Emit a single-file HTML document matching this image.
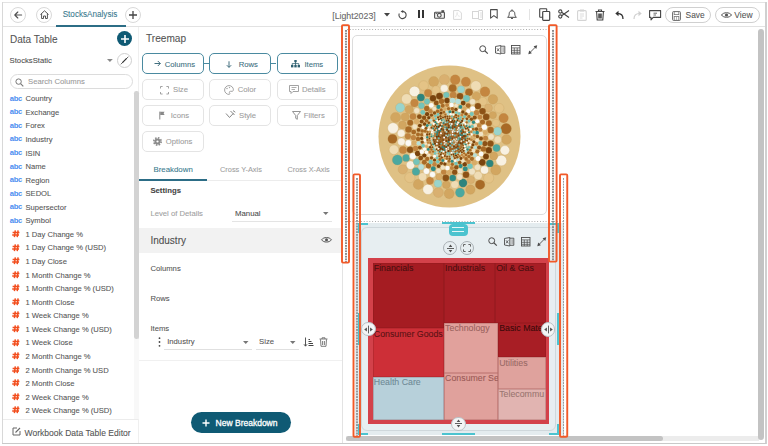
<!DOCTYPE html>
<html><head><meta charset="utf-8"><style>
html,body{margin:0;padding:0;width:768px;height:446px;overflow:hidden;background:#fff}
.t{position:absolute;white-space:nowrap;font-family:"Liberation Sans", sans-serif;-webkit-text-stroke:0.08px currentColor}
.b{position:absolute}
.s{position:absolute;overflow:visible}
</style></head><body>
<div class="b" style="left:2px;top:2px;width:765px;height:1px;background:#e3e3e3"></div>
<div class="b" style="left:2px;top:2px;width:1px;height:442px;background:#d8d8d8"></div>
<div class="b" style="left:765px;top:2px;width:1.5px;height:442px;background:#d0d0d0"></div>
<div class="b" style="left:2px;top:442.5px;width:764px;height:1.5px;background:#c9c9c9"></div>
<div class="b" style="left:3px;top:26.2px;width:762px;height:1.0px;background:#e2e2e2"></div>
<div class="b" style="left:10px;top:6.5px;width:16px;height:16.0px;border:1px solid #d9d9d9;border-radius:50%;box-sizing:border-box"></div>
<svg class="s" style="left:13px;top:9.5px" width="10" height="10" viewBox="0 0 10 10"><path d="M8.6 5H2M4.8 2L1.8 5L4.8 8" stroke="#505050" stroke-width="1.15" fill="none" stroke-linecap="round" stroke-linejoin="round"/></svg>
<div class="b" style="left:36px;top:6.5px;width:16px;height:16.0px;border:1px solid #d9d9d9;border-radius:50%;box-sizing:border-box"></div>
<svg class="s" style="left:38.5px;top:9px" width="11" height="11" viewBox="0 0 11 11"><path d="M1.5 5.5L5.5 1.8L9.5 5.5M2.6 4.8V9.5H4.5V7H6.5V9.5H8.4V4.8" stroke="#555" stroke-width="1" fill="none" stroke-linejoin="round"/></svg>
<div class="t" style="left:62.7px;top:10.11px;font-size:8.15px;line-height:9.78px;color:#3a7a8e;font-weight:400;">StocksAnalysis</div>
<div class="b" style="left:56px;top:25px;width:70px;height:1.8000000000000007px;background:#2c6d86"></div>
<div class="b" style="left:125px;top:6.5px;width:16px;height:16.0px;border:1px solid #d9d9d9;border-radius:50%;box-sizing:border-box"></div>
<svg class="s" style="left:128px;top:9.5px" width="10" height="10" viewBox="0 0 10 10"><path d="M5 1V9M1 5H9" stroke="#444" stroke-width="1.3"/></svg>
<div class="t" style="left:332.2px;top:10.62px;font-size:8.8px;line-height:10.56px;color:#666;font-weight:400;">[Light2023]</div>
<svg class="s" style="left:383.5px;top:13px" width="7" height="4" viewBox="0 0 7 4"><path d="M0 0H6L3 3.5Z" fill="#444"/></svg>
<svg class="s" style="left:398px;top:10px" width="9" height="9.5" viewBox="0 0 9 9.5"><path d="M4.6 1.4A3.6 3.6 0 1 1 1.3 3.4" stroke="#4a4a4a" stroke-width="1.1" fill="none"/><path d="M2.6 1.4L5.2 -0.1V2.9Z" fill="#4a4a4a"/></svg>
<div class="b" style="left:417.8px;top:10px;width:2.3999999999999773px;height:8px;background:#333"></div>
<div class="b" style="left:421.8px;top:10px;width:2.3999999999999773px;height:8px;background:#333"></div>
<svg class="s" style="left:434px;top:10px" width="11" height="9" viewBox="0 0 11 9"><rect x="0.6" y="2.3" width="9.8" height="6" rx="0.8" stroke="#505050" stroke-width="1.1" fill="#f4f4f4"/><circle cx="5.3" cy="5.3" r="1.9" stroke="#505050" stroke-width="1.1" fill="none"/><rect x="7.4" y="0.2" width="2.8" height="2.2" fill="#505050"/><path d="M1.6 3.6H3" stroke="#505050" stroke-width="0.9"/></svg>
<svg class="s" style="left:453px;top:9.5px" width="9" height="10" viewBox="0 0 9 10"><path d="M0.6 0.6H6L8.4 3V9.4H0.6Z" stroke="#d9d9d9" stroke-width="1" fill="none"/><path d="M2.3 7.2C3.5 5 4.5 3.5 4.3 2.5C4 2 3.5 3 4.5 4.8C5.2 6 6.3 6.5 6.8 6.2" stroke="#dedede" stroke-width="0.7" fill="none"/></svg>
<svg class="s" style="left:471.5px;top:9.5px" width="11" height="10" viewBox="0 0 11 10"><rect x="0.5" y="1.5" width="6" height="7" stroke="#d6d6d6" fill="none"/><path d="M6.5 0.5H10.5V9.5H6.5" stroke="#d6d6d6" fill="none"/><path d="M8 3H10M8 5H10M8 7H10" stroke="#e0e0e0"/></svg>
<svg class="s" style="left:490.3px;top:9.3px" width="8" height="10" viewBox="0 0 8 10"><path d="M0.6 0.6H7.2V9.2L3.9 6.6L0.6 9.2Z" stroke="#4a4a4a" stroke-width="1.05" fill="none" stroke-linejoin="round"/></svg>
<svg class="s" style="left:507.3px;top:9px" width="10" height="10.5" viewBox="0 0 10 10.5"><path d="M0.6 8.3H9.4C8.2 7.3 7.8 6.2 7.8 4.8C7.8 2.9 6.8 1.8 5 1.8C3.2 1.8 2.2 2.9 2.2 4.8C2.2 6.2 1.8 7.3 0.6 8.3Z" stroke="#4a4a4a" stroke-width="1" fill="none" stroke-linejoin="round"/><path d="M5 0.4V1.8M4 9.4H6" stroke="#4a4a4a" stroke-width="1"/></svg>
<div class="b" style="left:529px;top:9px;width:1px;height:11px;background:#e3e3e3"></div>
<svg class="s" style="left:539px;top:8px" width="12" height="13" viewBox="0 0 12 13"><rect x="0.7" y="0.7" width="7" height="8.5" rx="0.5" stroke="#444" stroke-width="1.1" fill="#fff"/><rect x="3.7" y="3.5" width="7" height="8.8" rx="0.8" stroke="#444" stroke-width="1.2" fill="#fff"/></svg>
<svg class="s" style="left:557.5px;top:9px" width="12" height="10" viewBox="0 0 12 10"><circle cx="2.3" cy="2.5" r="1.6" stroke="#444" stroke-width="1.1" fill="none"/><circle cx="2.3" cy="7.5" r="1.6" stroke="#444" stroke-width="1.1" fill="none"/><path d="M3.6 3.3L11 8.5M3.6 6.7L11 1.5" stroke="#444" stroke-width="1.1"/></svg>
<svg class="s" style="left:577px;top:8.5px" width="10" height="12" viewBox="0 0 10 12"><rect x="0.6" y="1.6" width="8.6" height="9.8" rx="1" stroke="#d4d4d4" stroke-width="1.1" fill="none"/><rect x="3" y="0.5" width="4" height="2" fill="#d4d4d4"/><path d="M2.8 5H7M2.8 7H7M2.8 9H5.5" stroke="#dcdcdc"/></svg>
<svg class="s" style="left:595px;top:8.5px" width="10" height="12" viewBox="0 0 10 12"><path d="M0.5 2.5H9.5M3.5 2.5V1H6.5V2.5M1.6 2.8L2.2 11H7.8L8.4 2.8M3.8 4.5V9.5M6.2 4.5V9.5M5 4.5V9.5" stroke="#444" stroke-width="1.1" fill="none"/></svg>
<svg class="s" style="left:614.5px;top:10px" width="9" height="10" viewBox="0 0 9 10"><path d="M8 9C8 5 6 3.5 2.5 3.5" stroke="#333" stroke-width="1.3" fill="none"/><path d="M0.3 3.5L3.5 0.8V6.2Z" fill="#333"/></svg>
<svg class="s" style="left:632.5px;top:10px" width="9" height="10" viewBox="0 0 9 10"><path d="M1 9C1 5 3 3.5 6.5 3.5" stroke="#cfcfcf" stroke-width="1.2" fill="none"/><path d="M8.7 3.5L5.5 0.8V6.2Z" fill="#cfcfcf"/></svg>
<svg class="s" style="left:649px;top:9.8px" width="12.5" height="11" viewBox="0 0 12.5 11"><path d="M0.6 0.6H11.6V7.4H4.2L2 9.8V7.4H0.6Z" stroke="#444" stroke-width="1.1" fill="none" stroke-linejoin="round"/><path d="M4.5 3.2H8M4.5 5H7" stroke="#444" stroke-width="0.8"/></svg>
<div class="b" style="left:665px;top:7px;width:46px;height:16px;border:1px solid #d0d0d0;border-radius:8px;box-sizing:border-box"></div>
<svg class="s" style="left:671.5px;top:10.5px" width="9" height="10" viewBox="0 0 9 10"><rect x="0.6" y="0.6" width="7.8" height="8.8" rx="0.8" stroke="#666" stroke-width="1" fill="none"/><rect x="2.2" y="0.6" width="4.6" height="3" stroke="#777" stroke-width="0.8" fill="none"/><rect x="2.2" y="5.5" width="4.6" height="3.9" stroke="#777" stroke-width="0.8" fill="none"/><path d="M4.5 5.5V9.4" stroke="#888" stroke-width="0.6"/></svg>
<div class="t" style="left:685.6px;top:10.16px;font-size:8.4px;line-height:10.08px;color:#555;font-weight:400;">Save</div>
<div class="b" style="left:715px;top:7px;width:45px;height:16px;border:1px solid #d0d0d0;border-radius:8px;box-sizing:border-box"></div>
<svg class="s" style="left:720.5px;top:11px" width="11" height="8" viewBox="0 0 11 8"><path d="M0.5 4C2.3 1 8.7 1 10.5 4C8.7 7 2.3 7 0.5 4Z" stroke="#555" stroke-width="1" fill="none"/><circle cx="5.5" cy="4" r="1.6" fill="#555"/></svg>
<div class="t" style="left:734.3px;top:10.10px;font-size:8.5px;line-height:10.20px;color:#555;font-weight:400;">View</div>
<div class="b" style="left:138px;top:27px;width:1px;height:416px;background:#efefef"></div>
<div class="t" style="left:10px;top:33.60px;font-size:10px;line-height:12.00px;color:#555;font-weight:400;">Data Table</div>
<div class="b" style="left:116.7px;top:30.8px;width:15.299999999999997px;height:15.2px;background:#0f5a74;border-radius:50%"></div>
<svg class="s" style="left:119.5px;top:33.5px" width="10" height="10" viewBox="0 0 10 10"><path d="M5 1V9M1 5H9" stroke="#fff" stroke-width="1.6"/></svg>
<div class="t" style="left:9.6px;top:56.18px;font-size:7.7px;line-height:9.24px;color:#4d4d4d;font-weight:400;">StocksStatic</div>
<svg class="s" style="left:107.3px;top:58.6px" width="6" height="4" viewBox="0 0 6 4"><path d="M0 0H5.8L2.9 3Z" fill="#888"/></svg>
<div class="b" style="left:117px;top:52.7px;width:15px;height:15.0px;border:1px solid #cfcfcf;border-radius:50%;box-sizing:border-box"></div>
<svg class="s" style="left:119.8px;top:55.5px" width="9" height="9" viewBox="0 0 9 9"><path d="M0.8 8.3L8.4 0.7" stroke="#333" stroke-width="0.8"/><path d="M2 6.2L2.8 7L7 2.8L6.2 2Z" fill="#333"/></svg>
<div class="b" style="left:10px;top:74.4px;width:122.5px;height:14.799999999999997px;border:1px solid #dcdcdc;border-radius:8px;box-sizing:border-box"></div>
<svg class="s" style="left:14.5px;top:77.5px" width="9" height="9" viewBox="0 0 9 9"><circle cx="3.6" cy="3.6" r="2.7" stroke="#777" stroke-width="1" fill="none"/><path d="M5.6 5.6L8.3 8.3" stroke="#777" stroke-width="1.1"/></svg>
<div class="t" style="left:28px;top:77.38px;font-size:7.7px;line-height:9.24px;color:#999;font-weight:400;">Search Columns</div>
<div class="t" style="left:9.8px;top:93.69px;font-size:7.6px;line-height:9.12px;color:#4a8ef0;font-weight:700;letter-spacing:-0.35px;-webkit-text-stroke:0">abc</div>
<div class="t" style="left:25.5px;top:94.24px;font-size:7.6px;line-height:9.12px;color:#555;font-weight:400;">Country</div>
<div class="t" style="left:9.8px;top:107.25px;font-size:7.6px;line-height:9.12px;color:#4a8ef0;font-weight:700;letter-spacing:-0.35px;-webkit-text-stroke:0">abc</div>
<div class="t" style="left:25.5px;top:107.80px;font-size:7.6px;line-height:9.12px;color:#555;font-weight:400;">Exchange</div>
<div class="t" style="left:9.8px;top:120.82px;font-size:7.6px;line-height:9.12px;color:#4a8ef0;font-weight:700;letter-spacing:-0.35px;-webkit-text-stroke:0">abc</div>
<div class="t" style="left:25.5px;top:121.37px;font-size:7.6px;line-height:9.12px;color:#555;font-weight:400;">Forex</div>
<div class="t" style="left:9.8px;top:134.38px;font-size:7.6px;line-height:9.12px;color:#4a8ef0;font-weight:700;letter-spacing:-0.35px;-webkit-text-stroke:0">abc</div>
<div class="t" style="left:25.5px;top:134.94px;font-size:7.6px;line-height:9.12px;color:#555;font-weight:400;">Industry</div>
<div class="t" style="left:9.8px;top:147.95px;font-size:7.6px;line-height:9.12px;color:#4a8ef0;font-weight:700;letter-spacing:-0.35px;-webkit-text-stroke:0">abc</div>
<div class="t" style="left:25.5px;top:148.50px;font-size:7.6px;line-height:9.12px;color:#555;font-weight:400;">ISIN</div>
<div class="t" style="left:9.8px;top:161.51px;font-size:7.6px;line-height:9.12px;color:#4a8ef0;font-weight:700;letter-spacing:-0.35px;-webkit-text-stroke:0">abc</div>
<div class="t" style="left:25.5px;top:162.06px;font-size:7.6px;line-height:9.12px;color:#555;font-weight:400;">Name</div>
<div class="t" style="left:9.8px;top:175.08px;font-size:7.6px;line-height:9.12px;color:#4a8ef0;font-weight:700;letter-spacing:-0.35px;-webkit-text-stroke:0">abc</div>
<div class="t" style="left:25.5px;top:175.63px;font-size:7.6px;line-height:9.12px;color:#555;font-weight:400;">Region</div>
<div class="t" style="left:9.8px;top:188.64px;font-size:7.6px;line-height:9.12px;color:#4a8ef0;font-weight:700;letter-spacing:-0.35px;-webkit-text-stroke:0">abc</div>
<div class="t" style="left:25.5px;top:189.19px;font-size:7.6px;line-height:9.12px;color:#555;font-weight:400;">SEDOL</div>
<div class="t" style="left:9.8px;top:202.21px;font-size:7.6px;line-height:9.12px;color:#4a8ef0;font-weight:700;letter-spacing:-0.35px;-webkit-text-stroke:0">abc</div>
<div class="t" style="left:25.5px;top:202.76px;font-size:7.6px;line-height:9.12px;color:#555;font-weight:400;">Supersector</div>
<div class="t" style="left:9.8px;top:215.77px;font-size:7.6px;line-height:9.12px;color:#4a8ef0;font-weight:700;letter-spacing:-0.35px;-webkit-text-stroke:0">abc</div>
<div class="t" style="left:25.5px;top:216.32px;font-size:7.6px;line-height:9.12px;color:#555;font-weight:400;">Symbol</div>
<svg class="s" style="left:12px;top:230.04999999999998px" width="8" height="8" viewBox="0 0 8 8"><path d="M3.3 0.3L2.4 7.2M6.1 0.3L5.2 7.2M0.6 2.5H7.4M0.2 5H7" stroke="#f24e1e" stroke-width="1.5" fill="none"/></svg>
<div class="t" style="left:25.5px;top:229.89px;font-size:7.6px;line-height:9.12px;color:#555;font-weight:400;">1 Day Change %</div>
<svg class="s" style="left:12px;top:243.61499999999998px" width="8" height="8" viewBox="0 0 8 8"><path d="M3.3 0.3L2.4 7.2M6.1 0.3L5.2 7.2M0.6 2.5H7.4M0.2 5H7" stroke="#f24e1e" stroke-width="1.5" fill="none"/></svg>
<div class="t" style="left:25.5px;top:243.45px;font-size:7.6px;line-height:9.12px;color:#555;font-weight:400;">1 Day Change % (USD)</div>
<svg class="s" style="left:12px;top:257.18px" width="8" height="8" viewBox="0 0 8 8"><path d="M3.3 0.3L2.4 7.2M6.1 0.3L5.2 7.2M0.6 2.5H7.4M0.2 5H7" stroke="#f24e1e" stroke-width="1.5" fill="none"/></svg>
<div class="t" style="left:25.5px;top:257.02px;font-size:7.6px;line-height:9.12px;color:#555;font-weight:400;">1 Day Close</div>
<svg class="s" style="left:12px;top:270.745px" width="8" height="8" viewBox="0 0 8 8"><path d="M3.3 0.3L2.4 7.2M6.1 0.3L5.2 7.2M0.6 2.5H7.4M0.2 5H7" stroke="#f24e1e" stroke-width="1.5" fill="none"/></svg>
<div class="t" style="left:25.5px;top:270.58px;font-size:7.6px;line-height:9.12px;color:#555;font-weight:400;">1 Month Change %</div>
<svg class="s" style="left:12px;top:284.31px" width="8" height="8" viewBox="0 0 8 8"><path d="M3.3 0.3L2.4 7.2M6.1 0.3L5.2 7.2M0.6 2.5H7.4M0.2 5H7" stroke="#f24e1e" stroke-width="1.5" fill="none"/></svg>
<div class="t" style="left:25.5px;top:284.15px;font-size:7.6px;line-height:9.12px;color:#555;font-weight:400;">1 Month Change % (USD)</div>
<svg class="s" style="left:12px;top:297.875px" width="8" height="8" viewBox="0 0 8 8"><path d="M3.3 0.3L2.4 7.2M6.1 0.3L5.2 7.2M0.6 2.5H7.4M0.2 5H7" stroke="#f24e1e" stroke-width="1.5" fill="none"/></svg>
<div class="t" style="left:25.5px;top:297.71px;font-size:7.6px;line-height:9.12px;color:#555;font-weight:400;">1 Month Close</div>
<svg class="s" style="left:12px;top:311.44px" width="8" height="8" viewBox="0 0 8 8"><path d="M3.3 0.3L2.4 7.2M6.1 0.3L5.2 7.2M0.6 2.5H7.4M0.2 5H7" stroke="#f24e1e" stroke-width="1.5" fill="none"/></svg>
<div class="t" style="left:25.5px;top:311.28px;font-size:7.6px;line-height:9.12px;color:#555;font-weight:400;">1 Week Change %</div>
<svg class="s" style="left:12px;top:325.005px" width="8" height="8" viewBox="0 0 8 8"><path d="M3.3 0.3L2.4 7.2M6.1 0.3L5.2 7.2M0.6 2.5H7.4M0.2 5H7" stroke="#f24e1e" stroke-width="1.5" fill="none"/></svg>
<div class="t" style="left:25.5px;top:324.84px;font-size:7.6px;line-height:9.12px;color:#555;font-weight:400;">1 Week Change % (USD)</div>
<svg class="s" style="left:12px;top:338.57px" width="8" height="8" viewBox="0 0 8 8"><path d="M3.3 0.3L2.4 7.2M6.1 0.3L5.2 7.2M0.6 2.5H7.4M0.2 5H7" stroke="#f24e1e" stroke-width="1.5" fill="none"/></svg>
<div class="t" style="left:25.5px;top:338.41px;font-size:7.6px;line-height:9.12px;color:#555;font-weight:400;">1 Week Close</div>
<svg class="s" style="left:12px;top:352.13500000000005px" width="8" height="8" viewBox="0 0 8 8"><path d="M3.3 0.3L2.4 7.2M6.1 0.3L5.2 7.2M0.6 2.5H7.4M0.2 5H7" stroke="#f24e1e" stroke-width="1.5" fill="none"/></svg>
<div class="t" style="left:25.5px;top:351.98px;font-size:7.6px;line-height:9.12px;color:#555;font-weight:400;">2 Month Change %</div>
<svg class="s" style="left:12px;top:365.70000000000005px" width="8" height="8" viewBox="0 0 8 8"><path d="M3.3 0.3L2.4 7.2M6.1 0.3L5.2 7.2M0.6 2.5H7.4M0.2 5H7" stroke="#f24e1e" stroke-width="1.5" fill="none"/></svg>
<div class="t" style="left:25.5px;top:365.54px;font-size:7.6px;line-height:9.12px;color:#555;font-weight:400;">2 Month Change % USD</div>
<svg class="s" style="left:12px;top:379.26500000000004px" width="8" height="8" viewBox="0 0 8 8"><path d="M3.3 0.3L2.4 7.2M6.1 0.3L5.2 7.2M0.6 2.5H7.4M0.2 5H7" stroke="#f24e1e" stroke-width="1.5" fill="none"/></svg>
<div class="t" style="left:25.5px;top:379.11px;font-size:7.6px;line-height:9.12px;color:#555;font-weight:400;">2 Month Close</div>
<svg class="s" style="left:12px;top:392.83000000000004px" width="8" height="8" viewBox="0 0 8 8"><path d="M3.3 0.3L2.4 7.2M6.1 0.3L5.2 7.2M0.6 2.5H7.4M0.2 5H7" stroke="#f24e1e" stroke-width="1.5" fill="none"/></svg>
<div class="t" style="left:25.5px;top:392.67px;font-size:7.6px;line-height:9.12px;color:#555;font-weight:400;">2 Week Change %</div>
<svg class="s" style="left:12px;top:406.39500000000004px" width="8" height="8" viewBox="0 0 8 8"><path d="M3.3 0.3L2.4 7.2M6.1 0.3L5.2 7.2M0.6 2.5H7.4M0.2 5H7" stroke="#f24e1e" stroke-width="1.5" fill="none"/></svg>
<div class="t" style="left:25.5px;top:406.24px;font-size:7.6px;line-height:9.12px;color:#555;font-weight:400;">2 Week Change % (USD)</div>
<div class="b" style="left:134.3px;top:91.3px;width:4.399999999999977px;height:247.3px;background:#d3d3d3;border-radius:2.2px"></div>
<div class="b" style="left:134.3px;top:338.6px;width:4.399999999999977px;height:80.69999999999999px;background:#f8f8f8"></div>
<div class="b" style="left:3px;top:419.3px;width:135px;height:1.0px;background:#ececec"></div>
<svg class="s" style="left:11.5px;top:427px" width="9" height="9" viewBox="0 0 9 9"><path d="M5 1H1V8H8V4" stroke="#666" stroke-width="1" fill="none"/><path d="M3.5 5.5L8 1" stroke="#666" stroke-width="1.1"/></svg>
<div class="t" style="left:24.5px;top:427.67px;font-size:8.55px;line-height:10.26px;color:#555;font-weight:400;">Workbook Data Table Editor</div>
<div class="b" style="left:342px;top:27px;width:1px;height:416px;background:#e3e3e3"></div>
<div class="t" style="left:146px;top:32.54px;font-size:10.1px;line-height:12.12px;color:#555;font-weight:400;">Treemap</div>
<div class="b" style="left:142.1px;top:53.3px;width:61.5px;height:20.39999999999999px;border:1px solid #4a8aa0;border-radius:5px;box-sizing:border-box"></div>
<svg class="s" style="left:153.5px;top:60px" width="7" height="7" viewBox="0 0 7 7"><path d="M0.5 3.5H6.3M3.8 1L6.3 3.5L3.8 6" stroke="#2d5f70" stroke-width="0.9" fill="none"/></svg>
<div class="t" style="left:164.7px;top:59.88px;font-size:7.7px;line-height:9.24px;color:#3d6f80;font-weight:400;">Columns</div>
<div class="b" style="left:209.4px;top:53.3px;width:61.49999999999997px;height:20.39999999999999px;border:1px solid #4a8aa0;border-radius:5px;box-sizing:border-box"></div>
<svg class="s" style="left:226px;top:60.5px" width="6" height="7" viewBox="0 0 6 7"><path d="M3 0.3V6.3M0.8 4.2L3 6.4L5.2 4.2" stroke="#2d5f70" stroke-width="0.9" fill="none"/></svg>
<div class="t" style="left:238.7px;top:59.88px;font-size:7.7px;line-height:9.24px;color:#3d6f80;font-weight:400;">Rows</div>
<div class="b" style="left:276.5px;top:53.3px;width:61.5px;height:20.39999999999999px;border:1px solid #4a8aa0;border-radius:5px;box-sizing:border-box"></div>
<svg class="s" style="left:291px;top:60px" width="9" height="8" viewBox="0 0 9 8"><rect x="3.3" y="0" width="2.4" height="2.2" fill="#2d5f70"/><rect x="0" y="5" width="2.4" height="2.4" fill="#2d5f70"/><rect x="3.3" y="5" width="2.4" height="2.4" fill="#2d5f70"/><rect x="6.6" y="5" width="2.4" height="2.4" fill="#2d5f70"/><path d="M4.5 2V5M1.2 5V3.6H7.8V5" stroke="#2d5f70" stroke-width="0.8" fill="none"/></svg>
<div class="t" style="left:304.4px;top:59.88px;font-size:7.7px;line-height:9.24px;color:#3d6f80;font-weight:400;">Items</div>
<div class="b" style="left:203.6px;top:63.1px;width:5.800000000000011px;height:1.1000000000000014px;background:#4a8aa0"></div>
<div class="b" style="left:270.9px;top:63.1px;width:5.600000000000023px;height:1.1000000000000014px;background:#4a8aa0"></div>
<div class="b" style="left:142.1px;top:79.3px;width:61.5px;height:20.39999999999999px;border:1px solid #e4e4e4;border-radius:5px;box-sizing:border-box"></div>
<svg class="s" style="left:160px;top:86px" width="9" height="8.5" viewBox="0 0 9 8.5"><path d="M0.5 2.5V0.5H2.6M6.4 0.5H8.5V2.5M8.5 6V8H6.4M2.6 8H0.5V6" stroke="#999" stroke-width="0.9" fill="none"/></svg>
<div class="t" style="left:173px;top:85.38px;font-size:7.7px;line-height:9.24px;color:#9c9c9c;font-weight:400;">Size</div>
<div class="b" style="left:209.4px;top:79.3px;width:61.49999999999997px;height:20.39999999999999px;border:1px solid #e4e4e4;border-radius:5px;box-sizing:border-box"></div>
<svg class="s" style="left:224px;top:84.5px" width="10" height="10" viewBox="0 0 10 10"><path d="M5 0.6A4.4 4.4 0 1 0 5 9.4C6 9.4 6 8.4 5.5 7.8C5 7 5.6 6.3 6.4 6.3H8C9 6.3 9.4 5.6 9.4 4.8C9.4 2.5 7.5 0.6 5 0.6Z" stroke="#999" stroke-width="0.9" fill="none"/><circle cx="3" cy="3.5" r="0.7" fill="#999"/><circle cx="5.5" cy="2.6" r="0.7" fill="#999"/></svg>
<div class="t" style="left:237.8px;top:85.38px;font-size:7.7px;line-height:9.24px;color:#9c9c9c;font-weight:400;">Color</div>
<div class="b" style="left:276.5px;top:79.3px;width:61.5px;height:20.39999999999999px;border:1px solid #e4e4e4;border-radius:5px;box-sizing:border-box"></div>
<svg class="s" style="left:289px;top:85px" width="10" height="9" viewBox="0 0 10 9"><path d="M0.5 0.5H9.5V6.5H4L2 8.5V6.5H0.5Z" stroke="#999" stroke-width="0.9" fill="none"/><path d="M2.5 2.5H7.5M2.5 4.5H6" stroke="#999" stroke-width="0.8"/></svg>
<div class="t" style="left:302px;top:85.38px;font-size:7.7px;line-height:9.24px;color:#9c9c9c;font-weight:400;">Details</div>
<div class="b" style="left:142.1px;top:105.2px;width:61.5px;height:20.39999999999999px;border:1px solid #e4e4e4;border-radius:5px;box-sizing:border-box"></div>
<svg class="s" style="left:158.8px;top:111.3px" width="7" height="9" viewBox="0 0 7 9"><path d="M0.8 8.5V0.6" stroke="#888" stroke-width="1"/><path d="M1.2 0.7H5.6L4.6 2.3L5.6 3.9H1.2Z" fill="#888"/></svg>
<div class="t" style="left:170.7px;top:111.28px;font-size:7.7px;line-height:9.24px;color:#9c9c9c;font-weight:400;">Icons</div>
<div class="b" style="left:209.4px;top:105.2px;width:61.49999999999997px;height:20.39999999999999px;border:1px solid #e4e4e4;border-radius:5px;box-sizing:border-box"></div>
<svg class="s" style="left:225px;top:110px" width="11" height="10" viewBox="0 0 11 10"><path d="M1 3.5L4.5 7.5L8.5 3.2M5.5 1L9.5 5M8 0.6L10.3 2.2" stroke="#888" stroke-width="1" fill="none"/></svg>
<div class="t" style="left:239px;top:111.28px;font-size:7.7px;line-height:9.24px;color:#9c9c9c;font-weight:400;">Style</div>
<div class="b" style="left:276.5px;top:105.2px;width:61.5px;height:20.39999999999999px;border:1px solid #e4e4e4;border-radius:5px;box-sizing:border-box"></div>
<svg class="s" style="left:291.5px;top:111.3px" width="9" height="9" viewBox="0 0 9 9"><path d="M0.5 0.5H8.5L5.3 4.5V8.3L3.7 7.3V4.5Z" stroke="#888" stroke-width="0.9" fill="none" stroke-linejoin="round"/></svg>
<div class="t" style="left:303.8px;top:111.28px;font-size:7.7px;line-height:9.24px;color:#9c9c9c;font-weight:400;">Filters</div>
<div class="b" style="left:142.1px;top:131.2px;width:61.5px;height:20.400000000000006px;border:1px solid #e4e4e4;border-radius:5px;box-sizing:border-box"></div>
<svg class="s" style="left:153px;top:137px" width="9" height="9" viewBox="0 0 9 9"><circle cx="4.5" cy="4.5" r="3.7" stroke="#8a8a8a" stroke-width="1.6" fill="none" stroke-dasharray="1.55 1.35"/><circle cx="4.5" cy="4.5" r="3.1" fill="#8a8a8a"/><circle cx="4.5" cy="4.5" r="1.1" fill="#fff"/></svg>
<div class="t" style="left:165.8px;top:137.28px;font-size:7.7px;line-height:9.24px;color:#9c9c9c;font-weight:400;">Options</div>
<div class="t" style="left:153.5px;top:165.09px;font-size:7.85px;line-height:9.42px;color:#3a7a8e;font-weight:400;">Breakdown</div>
<div class="t" style="left:220px;top:166.06px;font-size:7.4px;line-height:8.88px;color:#a0a0a0;font-weight:400;">Cross Y-Axis</div>
<div class="t" style="left:287.6px;top:166.12px;font-size:7.3px;line-height:8.76px;color:#a0a0a0;font-weight:400;">Cross X-Axis</div>
<div class="b" style="left:139px;top:180px;width:203px;height:1px;background:#ececec"></div>
<div class="b" style="left:139.4px;top:178.8px;width:67.6px;height:1.799999999999983px;background:#2c6d86"></div>
<div class="t" style="left:150.4px;top:185.65px;font-size:7.75px;line-height:9.30px;color:#444;font-weight:700;">Settings</div>
<div class="t" style="left:150.4px;top:209.38px;font-size:7.7px;line-height:9.24px;color:#a0a0a0;font-weight:400;">Level of Details</div>
<div class="t" style="left:235px;top:208.92px;font-size:7.8px;line-height:9.36px;color:#4d4d4d;font-weight:400;">Manual</div>
<div class="b" style="left:232px;top:220.6px;width:99.5px;height:1.0px;background:#e4e4e4"></div>
<svg class="s" style="left:322.5px;top:211.5px" width="6" height="4" viewBox="0 0 6 4"><path d="M0 0H5.5L2.75 3Z" fill="#777"/></svg>
<div class="b" style="left:139px;top:227.8px;width:203px;height:25.19999999999999px;background:#f2f2f2"></div>
<div class="t" style="left:150.4px;top:235.10px;font-size:10px;line-height:12.00px;color:#4d4d4d;font-weight:400;">Industry</div>
<svg class="s" style="left:320.5px;top:236px" width="11" height="8" viewBox="0 0 11 8"><path d="M0.6 3.8C2.5 0.8 8.5 0.8 10.4 3.8C8.5 6.8 2.5 6.8 0.6 3.8Z" stroke="#555" stroke-width="1" fill="none"/><circle cx="5.5" cy="3.8" r="1.5" fill="#555"/></svg>
<div class="t" style="left:150.4px;top:263.98px;font-size:7.7px;line-height:9.24px;color:#555;font-weight:400;">Columns</div>
<div class="t" style="left:150.4px;top:293.98px;font-size:7.7px;line-height:9.24px;color:#555;font-weight:400;">Rows</div>
<div class="t" style="left:150.4px;top:324.08px;font-size:7.7px;line-height:9.24px;color:#555;font-weight:400;">Items</div>
<svg class="s" style="left:157.5px;top:336.5px" width="3" height="10" viewBox="0 0 3 10"><circle cx="1.5" cy="1.2" r="0.9" fill="#444"/><circle cx="1.5" cy="5" r="0.9" fill="#444"/><circle cx="1.5" cy="8.8" r="0.9" fill="#444"/></svg>
<div class="t" style="left:167.2px;top:337.18px;font-size:7.7px;line-height:9.24px;color:#555;font-weight:400;">Industry</div>
<div class="b" style="left:164.2px;top:348.8px;width:87.80000000000001px;height:1.0px;background:#e0e0e0"></div>
<svg class="s" style="left:243px;top:340.5px" width="6" height="4" viewBox="0 0 6 4"><path d="M0 0H5.5L2.75 3Z" fill="#777"/></svg>
<div class="t" style="left:259.1px;top:337.18px;font-size:7.7px;line-height:9.24px;color:#555;font-weight:400;">Size</div>
<div class="b" style="left:255.7px;top:348.8px;width:43.60000000000002px;height:1.0px;background:#e0e0e0"></div>
<svg class="s" style="left:290.3px;top:340.5px" width="6" height="4" viewBox="0 0 6 4"><path d="M0 0H5.5L2.75 3Z" fill="#777"/></svg>
<svg class="s" style="left:303.5px;top:336.5px" width="10" height="10" viewBox="0 0 10 10"><path d="M1.5 0.5V9M0 7.3L1.5 9.2L3 7.3" stroke="#444" stroke-width="0.9" fill="none"/><path d="M4.5 2.5H6M4.5 4.5H7.5M4.5 6.5H9M4.5 8.5H9.5" stroke="#444" stroke-width="1"/></svg>
<svg class="s" style="left:318.5px;top:336.5px" width="9" height="10" viewBox="0 0 9 10"><path d="M0.5 2H8.5M3 2V0.8H6V2M1.5 2.3L2 9.3H7L7.5 2.3M3.6 4V8M5.4 4V8" stroke="#666" stroke-width="0.85" fill="none"/></svg>
<div class="b" style="left:139px;top:360px;width:203px;height:1px;background:#f0f0f0"></div>
<div class="b" style="left:190.6px;top:412px;width:100.1px;height:21.30000000000001px;background:#0f5a74;border-radius:11px"></div>
<svg class="s" style="left:201.5px;top:418.5px" width="8" height="8" viewBox="0 0 8 8"><path d="M4 0.5V7.5M0.5 4H7.5" stroke="#fff" stroke-width="1.4"/></svg>
<div class="t" style="left:215.6px;top:417.70px;font-size:8.5px;line-height:10.20px;color:#fff;font-weight:400;-webkit-text-stroke:0.3px #fff">New Breakdown</div>
<div class="b" style="left:346.5px;top:29.3px;width:202.5px;height:1.1000000000000014px;background-image:linear-gradient(to right,#a8a8a8 1.2px,transparent 1.2px);background-size:2.8px 1.1px"></div>
<div class="b" style="left:351.5px;top:35px;width:195.0px;height:179.8px;border:1px solid #dcdcdc;border-radius:5px;box-sizing:border-box;background:#fff"></div>
<svg class="s" style="left:478.9px;top:45.3px" width="9.5" height="9" viewBox="0 0 9.5 9"><circle cx="3.7" cy="3.7" r="2.95" stroke="#4d4d4d" stroke-width="1" fill="none"/><path d="M5.8 5.8L8.8 8.6" stroke="#4d4d4d" stroke-width="1.2"/></svg>
<svg class="s" style="left:494.5px;top:45.0px" width="10.5" height="9.5" viewBox="0 0 10.5 9.5"><path d="M0.5 1.5L5.8 0.5V9L0.5 8Z" stroke="#4d4d4d" stroke-width="0.9" fill="none"/><path d="M5.8 1.2H9.8V8.3H5.8" stroke="#4d4d4d" stroke-width="0.9" fill="none"/><path d="M2 3.3L4.3 6.3M4.3 3.3L2 6.3" stroke="#4d4d4d" stroke-width="0.8"/><path d="M7.2 2.2V7.3M8.5 2.2V7.3" stroke="#999" stroke-width="0.7"/></svg>
<svg class="s" style="left:510.8px;top:45.099999999999994px" width="9.5" height="9.5" viewBox="0 0 9.5 9.5"><rect x="0.5" y="0.5" width="8.5" height="8.5" stroke="#4d4d4d" stroke-width="0.9" fill="none"/><path d="M0.5 2.9H9M0.5 5.3H9M0.5 7.3H9M3.3 2.9V9M6.2 2.9V9" stroke="#4d4d4d" stroke-width="0.75"/></svg>
<svg class="s" style="left:527.6px;top:45.0px" width="9.5" height="9.5" viewBox="0 0 9.5 9.5"><path d="M1.8 7.7L7.7 1.8" stroke="#4d4d4d" stroke-width="0.9"/><path d="M9.2 0.3L5.6 1.2L8.3 3.9Z M0.3 9.2L1.2 5.6L3.9 8.3Z" fill="#4d4d4d"/></svg>
<svg class="s" style="left:0px;top:0px" width="768" height="446" viewBox="0 0 768 446"><circle cx="449.5" cy="136.5" r="71" fill="#dfc185"/>
<circle cx="449.5" cy="136.5" r="16" fill="#9a7040"/>
<circle cx="393.9" cy="149.7" r="4.77" fill="#efdcb4" stroke="#b8914f" stroke-opacity=".4" stroke-width=".5"/>
<circle cx="392.5" cy="138.9" r="4.67" fill="#a86a26" stroke="#b8914f" stroke-opacity=".4" stroke-width=".5"/>
<circle cx="393.0" cy="128.1" r="5.35" fill="#f8f1e2" stroke="#b8914f" stroke-opacity=".4" stroke-width=".5"/>
<circle cx="395.6" cy="117.5" r="5.09" fill="#d2a660" stroke="#b8914f" stroke-opacity=".4" stroke-width=".5"/>
<circle cx="400.2" cy="107.7" r="4.70" fill="#9ad4cc" stroke="#b8914f" stroke-opacity=".4" stroke-width=".5"/>
<circle cx="406.6" cy="98.9" r="5.20" fill="#efdcb4" stroke="#b8914f" stroke-opacity=".4" stroke-width=".5"/>
<circle cx="414.5" cy="91.4" r="5.22" fill="#f8f1e2" stroke="#b8914f" stroke-opacity=".4" stroke-width=".5"/>
<circle cx="423.6" cy="85.6" r="4.85" fill="#e4c386" stroke="#b8914f" stroke-opacity=".4" stroke-width=".5"/>
<circle cx="433.7" cy="81.6" r="5.05" fill="#d2a660" stroke="#b8914f" stroke-opacity=".4" stroke-width=".5"/>
<circle cx="444.4" cy="79.6" r="5.12" fill="#d9b070" stroke="#b8914f" stroke-opacity=".4" stroke-width=".5"/>
<circle cx="455.2" cy="79.7" r="4.96" fill="#c48640" stroke="#b8914f" stroke-opacity=".4" stroke-width=".5"/>
<circle cx="465.9" cy="81.8" r="4.75" fill="#c48640" stroke="#b8914f" stroke-opacity=".4" stroke-width=".5"/>
<circle cx="475.9" cy="85.9" r="5.18" fill="#efdcb4" stroke="#b8914f" stroke-opacity=".4" stroke-width=".5"/>
<circle cx="485.0" cy="91.8" r="4.99" fill="#c48640" stroke="#b8914f" stroke-opacity=".4" stroke-width=".5"/>
<circle cx="492.9" cy="99.3" r="4.87" fill="#d2a660" stroke="#b8914f" stroke-opacity=".4" stroke-width=".5"/>
<circle cx="499.1" cy="108.2" r="4.88" fill="#e4c386" stroke="#b8914f" stroke-opacity=".4" stroke-width=".5"/>
<circle cx="503.6" cy="118.1" r="4.82" fill="#c48640" stroke="#b8914f" stroke-opacity=".4" stroke-width=".5"/>
<circle cx="506.1" cy="128.7" r="5.34" fill="#a86a26" stroke="#b8914f" stroke-opacity=".4" stroke-width=".5"/>
<circle cx="506.5" cy="139.5" r="4.96" fill="#d2a660" stroke="#b8914f" stroke-opacity=".4" stroke-width=".5"/>
<circle cx="504.9" cy="150.3" r="4.69" fill="#f8f1e2" stroke="#b8914f" stroke-opacity=".4" stroke-width=".5"/>
<circle cx="501.3" cy="160.5" r="5.36" fill="#f8f1e2" stroke="#b8914f" stroke-opacity=".4" stroke-width=".5"/>
<circle cx="495.8" cy="169.9" r="5.12" fill="#d2a660" stroke="#b8914f" stroke-opacity=".4" stroke-width=".5"/>
<circle cx="488.7" cy="178.0" r="5.11" fill="#e4c386" stroke="#b8914f" stroke-opacity=".4" stroke-width=".5"/>
<circle cx="480.1" cy="184.7" r="4.82" fill="#a86a26" stroke="#b8914f" stroke-opacity=".4" stroke-width=".5"/>
<circle cx="470.4" cy="189.6" r="4.73" fill="#d2a660" stroke="#b8914f" stroke-opacity=".4" stroke-width=".5"/>
<circle cx="460.0" cy="192.6" r="4.68" fill="#4aa8a0" stroke="#b8914f" stroke-opacity=".4" stroke-width=".5"/>
<circle cx="449.2" cy="193.6" r="5.05" fill="#d2a660" stroke="#b8914f" stroke-opacity=".4" stroke-width=".5"/>
<circle cx="438.4" cy="192.5" r="4.99" fill="#d9b070" stroke="#b8914f" stroke-opacity=".4" stroke-width=".5"/>
<circle cx="428.0" cy="189.4" r="5.15" fill="#f8f1e2" stroke="#b8914f" stroke-opacity=".4" stroke-width=".5"/>
<circle cx="418.4" cy="184.4" r="5.11" fill="#d2a660" stroke="#b8914f" stroke-opacity=".4" stroke-width=".5"/>
<circle cx="409.9" cy="177.6" r="5.13" fill="#e4c386" stroke="#b8914f" stroke-opacity=".4" stroke-width=".5"/>
<circle cx="402.8" cy="169.4" r="4.71" fill="#d9b070" stroke="#b8914f" stroke-opacity=".4" stroke-width=".5"/>
<circle cx="397.4" cy="159.9" r="5.13" fill="#4aa8a0" stroke="#b8914f" stroke-opacity=".4" stroke-width=".5"/>
<circle cx="478.1" cy="175.5" r="4.22" fill="#efdcb4" stroke="#b8914f" stroke-opacity=".4" stroke-width=".5"/>
<circle cx="470.9" cy="179.9" r="3.70" fill="#d9b070" stroke="#b8914f" stroke-opacity=".4" stroke-width=".5"/>
<circle cx="463.0" cy="183.0" r="4.19" fill="#2c847e" stroke="#b8914f" stroke-opacity=".4" stroke-width=".5"/>
<circle cx="454.8" cy="184.6" r="3.99" fill="#efdcb4" stroke="#b8914f" stroke-opacity=".4" stroke-width=".5"/>
<circle cx="446.3" cy="184.8" r="3.85" fill="#d2a660" stroke="#b8914f" stroke-opacity=".4" stroke-width=".5"/>
<circle cx="438.0" cy="183.5" r="3.98" fill="#9ad4cc" stroke="#b8914f" stroke-opacity=".4" stroke-width=".5"/>
<circle cx="430.0" cy="180.8" r="3.68" fill="#c48640" stroke="#b8914f" stroke-opacity=".4" stroke-width=".5"/>
<circle cx="422.6" cy="176.8" r="4.14" fill="#efdcb4" stroke="#b8914f" stroke-opacity=".4" stroke-width=".5"/>
<circle cx="416.0" cy="171.5" r="3.90" fill="#4aa8a0" stroke="#b8914f" stroke-opacity=".4" stroke-width=".5"/>
<circle cx="410.5" cy="165.1" r="4.21" fill="#f8f1e2" stroke="#b8914f" stroke-opacity=".4" stroke-width=".5"/>
<circle cx="406.1" cy="157.9" r="3.64" fill="#4aa8a0" stroke="#b8914f" stroke-opacity=".4" stroke-width=".5"/>
<circle cx="403.0" cy="150.0" r="3.82" fill="#c48640" stroke="#b8914f" stroke-opacity=".4" stroke-width=".5"/>
<circle cx="401.4" cy="141.8" r="3.76" fill="#f8f1e2" stroke="#b8914f" stroke-opacity=".4" stroke-width=".5"/>
<circle cx="401.2" cy="133.3" r="3.82" fill="#f8f1e2" stroke="#b8914f" stroke-opacity=".4" stroke-width=".5"/>
<circle cx="402.5" cy="125.0" r="4.00" fill="#d2a660" stroke="#b8914f" stroke-opacity=".4" stroke-width=".5"/>
<circle cx="405.2" cy="117.0" r="4.09" fill="#d2a660" stroke="#b8914f" stroke-opacity=".4" stroke-width=".5"/>
<circle cx="409.2" cy="109.6" r="4.09" fill="#d2a660" stroke="#b8914f" stroke-opacity=".4" stroke-width=".5"/>
<circle cx="414.5" cy="103.0" r="3.92" fill="#c48640" stroke="#b8914f" stroke-opacity=".4" stroke-width=".5"/>
<circle cx="420.9" cy="97.5" r="3.78" fill="#2c847e" stroke="#b8914f" stroke-opacity=".4" stroke-width=".5"/>
<circle cx="428.1" cy="93.1" r="3.88" fill="#c48640" stroke="#b8914f" stroke-opacity=".4" stroke-width=".5"/>
<circle cx="436.0" cy="90.0" r="4.20" fill="#e4c386" stroke="#b8914f" stroke-opacity=".4" stroke-width=".5"/>
<circle cx="444.2" cy="88.4" r="3.85" fill="#f8f1e2" stroke="#b8914f" stroke-opacity=".4" stroke-width=".5"/>
<circle cx="452.7" cy="88.2" r="3.85" fill="#a86a26" stroke="#b8914f" stroke-opacity=".4" stroke-width=".5"/>
<circle cx="461.0" cy="89.5" r="3.73" fill="#9ad4cc" stroke="#b8914f" stroke-opacity=".4" stroke-width=".5"/>
<circle cx="469.0" cy="92.2" r="3.78" fill="#a86a26" stroke="#b8914f" stroke-opacity=".4" stroke-width=".5"/>
<circle cx="476.4" cy="96.2" r="4.21" fill="#d2a660" stroke="#b8914f" stroke-opacity=".4" stroke-width=".5"/>
<circle cx="483.0" cy="101.5" r="4.19" fill="#e4c386" stroke="#b8914f" stroke-opacity=".4" stroke-width=".5"/>
<circle cx="488.5" cy="107.9" r="3.99" fill="#d9b070" stroke="#b8914f" stroke-opacity=".4" stroke-width=".5"/>
<circle cx="492.9" cy="115.1" r="3.67" fill="#d2a660" stroke="#b8914f" stroke-opacity=".4" stroke-width=".5"/>
<circle cx="496.0" cy="123.0" r="3.86" fill="#e4c386" stroke="#b8914f" stroke-opacity=".4" stroke-width=".5"/>
<circle cx="497.6" cy="131.2" r="4.20" fill="#9ad4cc" stroke="#b8914f" stroke-opacity=".4" stroke-width=".5"/>
<circle cx="497.8" cy="139.7" r="3.71" fill="#efdcb4" stroke="#b8914f" stroke-opacity=".4" stroke-width=".5"/>
<circle cx="496.5" cy="148.0" r="3.71" fill="#4aa8a0" stroke="#b8914f" stroke-opacity=".4" stroke-width=".5"/>
<circle cx="493.8" cy="156.0" r="3.96" fill="#d2a660" stroke="#b8914f" stroke-opacity=".4" stroke-width=".5"/>
<circle cx="489.8" cy="163.4" r="3.67" fill="#2c847e" stroke="#b8914f" stroke-opacity=".4" stroke-width=".5"/>
<circle cx="484.5" cy="170.0" r="4.05" fill="#f8f1e2" stroke="#b8914f" stroke-opacity=".4" stroke-width=".5"/>
<circle cx="453.2" cy="95.1" r="3.38" fill="#c08440" stroke="#b8914f" stroke-opacity=".4" stroke-width=".5"/>
<circle cx="460.0" cy="96.2" r="3.30" fill="#8c5216" stroke="#b8914f" stroke-opacity=".4" stroke-width=".5"/>
<circle cx="466.5" cy="98.5" r="3.38" fill="#74c4ba" stroke="#b8914f" stroke-opacity=".4" stroke-width=".5"/>
<circle cx="472.5" cy="101.8" r="3.00" fill="#efe2c4" stroke="#b8914f" stroke-opacity=".4" stroke-width=".5"/>
<circle cx="477.9" cy="106.1" r="3.21" fill="#8c5216" stroke="#b8914f" stroke-opacity=".4" stroke-width=".5"/>
<circle cx="482.5" cy="111.2" r="3.26" fill="#8c5216" stroke="#b8914f" stroke-opacity=".4" stroke-width=".5"/>
<circle cx="486.2" cy="116.9" r="3.33" fill="#8c5216" stroke="#b8914f" stroke-opacity=".4" stroke-width=".5"/>
<circle cx="488.9" cy="123.2" r="2.96" fill="#a86a26" stroke="#b8914f" stroke-opacity=".4" stroke-width=".5"/>
<circle cx="490.6" cy="129.9" r="3.17" fill="#a86a26" stroke="#b8914f" stroke-opacity=".4" stroke-width=".5"/>
<circle cx="491.1" cy="136.8" r="3.14" fill="#efe2c4" stroke="#b8914f" stroke-opacity=".4" stroke-width=".5"/>
<circle cx="490.5" cy="143.6" r="3.19" fill="#8c5216" stroke="#b8914f" stroke-opacity=".4" stroke-width=".5"/>
<circle cx="488.8" cy="150.3" r="3.21" fill="#7a440e" stroke="#b8914f" stroke-opacity=".4" stroke-width=".5"/>
<circle cx="486.0" cy="156.5" r="2.97" fill="#7a440e" stroke="#b8914f" stroke-opacity=".4" stroke-width=".5"/>
<circle cx="482.2" cy="162.3" r="3.38" fill="#7a440e" stroke="#b8914f" stroke-opacity=".4" stroke-width=".5"/>
<circle cx="477.5" cy="167.3" r="3.21" fill="#efe2c4" stroke="#b8914f" stroke-opacity=".4" stroke-width=".5"/>
<circle cx="472.0" cy="171.5" r="3.39" fill="#efe2c4" stroke="#b8914f" stroke-opacity=".4" stroke-width=".5"/>
<circle cx="466.0" cy="174.7" r="3.26" fill="#8c5216" stroke="#b8914f" stroke-opacity=".4" stroke-width=".5"/>
<circle cx="459.5" cy="176.9" r="3.10" fill="#efe2c4" stroke="#b8914f" stroke-opacity=".4" stroke-width=".5"/>
<circle cx="452.7" cy="178.0" r="3.30" fill="#2e8c86" stroke="#b8914f" stroke-opacity=".4" stroke-width=".5"/>
<circle cx="445.8" cy="177.9" r="3.29" fill="#8c5216" stroke="#b8914f" stroke-opacity=".4" stroke-width=".5"/>
<circle cx="439.0" cy="176.8" r="3.19" fill="#d8ac68" stroke="#b8914f" stroke-opacity=".4" stroke-width=".5"/>
<circle cx="432.5" cy="174.5" r="2.98" fill="#fbfaf6" stroke="#b8914f" stroke-opacity=".4" stroke-width=".5"/>
<circle cx="426.5" cy="171.2" r="3.13" fill="#fbfaf6" stroke="#b8914f" stroke-opacity=".4" stroke-width=".5"/>
<circle cx="421.1" cy="166.9" r="3.07" fill="#b6dfd9" stroke="#b8914f" stroke-opacity=".4" stroke-width=".5"/>
<circle cx="416.5" cy="161.8" r="3.31" fill="#74c4ba" stroke="#b8914f" stroke-opacity=".4" stroke-width=".5"/>
<circle cx="412.8" cy="156.1" r="3.38" fill="#fbfaf6" stroke="#b8914f" stroke-opacity=".4" stroke-width=".5"/>
<circle cx="410.1" cy="149.8" r="3.24" fill="#8c5216" stroke="#b8914f" stroke-opacity=".4" stroke-width=".5"/>
<circle cx="408.4" cy="143.1" r="3.28" fill="#fbfaf6" stroke="#b8914f" stroke-opacity=".4" stroke-width=".5"/>
<circle cx="407.9" cy="136.2" r="2.99" fill="#c08440" stroke="#b8914f" stroke-opacity=".4" stroke-width=".5"/>
<circle cx="408.5" cy="129.4" r="3.25" fill="#a86a26" stroke="#b8914f" stroke-opacity=".4" stroke-width=".5"/>
<circle cx="410.2" cy="122.7" r="2.99" fill="#a86a26" stroke="#b8914f" stroke-opacity=".4" stroke-width=".5"/>
<circle cx="413.0" cy="116.5" r="3.18" fill="#c08440" stroke="#b8914f" stroke-opacity=".4" stroke-width=".5"/>
<circle cx="416.8" cy="110.7" r="2.97" fill="#efe2c4" stroke="#b8914f" stroke-opacity=".4" stroke-width=".5"/>
<circle cx="421.5" cy="105.7" r="3.11" fill="#74c4ba" stroke="#b8914f" stroke-opacity=".4" stroke-width=".5"/>
<circle cx="427.0" cy="101.5" r="2.96" fill="#74c4ba" stroke="#b8914f" stroke-opacity=".4" stroke-width=".5"/>
<circle cx="433.0" cy="98.3" r="3.24" fill="#7a440e" stroke="#b8914f" stroke-opacity=".4" stroke-width=".5"/>
<circle cx="439.5" cy="96.1" r="3.43" fill="#7a440e" stroke="#b8914f" stroke-opacity=".4" stroke-width=".5"/>
<circle cx="446.3" cy="95.0" r="3.01" fill="#74c4ba" stroke="#b8914f" stroke-opacity=".4" stroke-width=".5"/>
<circle cx="428.5" cy="165.8" r="2.68" fill="#a86a26"/>
<circle cx="424.3" cy="162.3" r="2.46" fill="#a86a26"/>
<circle cx="420.7" cy="158.1" r="2.42" fill="#8c5216"/>
<circle cx="417.7" cy="153.5" r="2.75" fill="#7a440e"/>
<circle cx="415.5" cy="148.4" r="2.66" fill="#c08440"/>
<circle cx="414.0" cy="143.1" r="2.58" fill="#d8ac68"/>
<circle cx="413.4" cy="137.6" r="2.62" fill="#c08440"/>
<circle cx="413.7" cy="132.1" r="2.47" fill="#a86a26"/>
<circle cx="414.8" cy="126.7" r="2.45" fill="#efe2c4"/>
<circle cx="416.7" cy="121.5" r="2.74" fill="#d8ac68"/>
<circle cx="419.4" cy="116.7" r="2.41" fill="#8c5216"/>
<circle cx="422.8" cy="112.3" r="2.40" fill="#74c4ba"/>
<circle cx="426.8" cy="108.5" r="2.70" fill="#a86a26"/>
<circle cx="431.3" cy="105.4" r="2.46" fill="#fbfaf6"/>
<circle cx="436.3" cy="102.9" r="2.48" fill="#8c5216"/>
<circle cx="441.5" cy="101.3" r="2.68" fill="#a86a26"/>
<circle cx="447.0" cy="100.5" r="2.68" fill="#7a440e"/>
<circle cx="452.5" cy="100.6" r="2.73" fill="#b6dfd9"/>
<circle cx="458.0" cy="101.4" r="2.73" fill="#b6dfd9"/>
<circle cx="463.2" cy="103.1" r="2.41" fill="#7a440e"/>
<circle cx="468.2" cy="105.6" r="2.47" fill="#a86a26"/>
<circle cx="472.7" cy="108.8" r="2.56" fill="#fbfaf6"/>
<circle cx="476.6" cy="112.7" r="2.70" fill="#c08440"/>
<circle cx="479.9" cy="117.1" r="2.46" fill="#c08440"/>
<circle cx="482.5" cy="122.0" r="2.55" fill="#a86a26"/>
<circle cx="484.4" cy="127.2" r="2.59" fill="#fbfaf6"/>
<circle cx="485.4" cy="132.6" r="2.45" fill="#d8ac68"/>
<circle cx="485.5" cy="138.2" r="2.50" fill="#c08440"/>
<circle cx="484.9" cy="143.6" r="2.58" fill="#8c5216"/>
<circle cx="483.4" cy="148.9" r="2.65" fill="#a86a26"/>
<circle cx="481.1" cy="154.0" r="2.43" fill="#fbfaf6"/>
<circle cx="478.0" cy="158.6" r="2.51" fill="#fbfaf6"/>
<circle cx="474.3" cy="162.7" r="2.61" fill="#d8ac68"/>
<circle cx="470.0" cy="166.2" r="2.72" fill="#74c4ba"/>
<circle cx="465.3" cy="168.9" r="2.46" fill="#2e8c86"/>
<circle cx="460.1" cy="171.0" r="2.50" fill="#efe2c4"/>
<circle cx="454.7" cy="172.2" r="2.59" fill="#8c5216"/>
<circle cx="449.2" cy="172.6" r="2.71" fill="#d8ac68"/>
<circle cx="443.7" cy="172.1" r="2.70" fill="#c08440"/>
<circle cx="438.4" cy="170.8" r="2.41" fill="#efe2c4"/>
<circle cx="433.3" cy="168.7" r="2.48" fill="#2e8c86"/>
<circle cx="418.6" cy="129.9" r="1.94" fill="#8c5216"/>
<circle cx="419.9" cy="125.6" r="1.95" fill="#7a440e"/>
<circle cx="421.7" cy="121.5" r="1.99" fill="#8c5216"/>
<circle cx="424.1" cy="117.7" r="2.20" fill="#8c5216"/>
<circle cx="427.1" cy="114.2" r="2.14" fill="#7a440e"/>
<circle cx="430.5" cy="111.3" r="2.22" fill="#c08440"/>
<circle cx="434.3" cy="108.8" r="1.98" fill="#efe2c4"/>
<circle cx="438.4" cy="106.9" r="2.05" fill="#2e8c86"/>
<circle cx="442.7" cy="105.7" r="2.04" fill="#a86a26"/>
<circle cx="447.1" cy="105.0" r="2.00" fill="#c08440"/>
<circle cx="451.6" cy="105.0" r="2.21" fill="#fbfaf6"/>
<circle cx="456.1" cy="105.6" r="1.94" fill="#efe2c4"/>
<circle cx="460.4" cy="106.9" r="1.94" fill="#2e8c86"/>
<circle cx="464.5" cy="108.7" r="2.21" fill="#d8ac68"/>
<circle cx="468.3" cy="111.1" r="2.22" fill="#fbfaf6"/>
<circle cx="471.8" cy="114.1" r="2.02" fill="#74c4ba"/>
<circle cx="474.7" cy="117.5" r="2.08" fill="#8c5216"/>
<circle cx="477.2" cy="121.3" r="2.01" fill="#fbfaf6"/>
<circle cx="479.1" cy="125.4" r="2.17" fill="#c08440"/>
<circle cx="480.3" cy="129.7" r="2.13" fill="#c08440"/>
<circle cx="481.0" cy="134.1" r="2.23" fill="#efe2c4"/>
<circle cx="481.0" cy="138.6" r="2.00" fill="#8c5216"/>
<circle cx="480.4" cy="143.1" r="2.15" fill="#74c4ba"/>
<circle cx="479.1" cy="147.4" r="1.98" fill="#8c5216"/>
<circle cx="477.3" cy="151.5" r="2.11" fill="#a86a26"/>
<circle cx="474.9" cy="155.3" r="2.01" fill="#b6dfd9"/>
<circle cx="471.9" cy="158.8" r="2.15" fill="#a86a26"/>
<circle cx="468.5" cy="161.7" r="2.20" fill="#c08440"/>
<circle cx="464.7" cy="164.2" r="2.23" fill="#7a440e"/>
<circle cx="460.6" cy="166.1" r="2.09" fill="#2e8c86"/>
<circle cx="456.3" cy="167.3" r="2.19" fill="#8c5216"/>
<circle cx="451.9" cy="168.0" r="2.08" fill="#c08440"/>
<circle cx="447.4" cy="168.0" r="2.24" fill="#fbfaf6"/>
<circle cx="442.9" cy="167.4" r="2.23" fill="#efe2c4"/>
<circle cx="438.6" cy="166.1" r="1.96" fill="#7a440e"/>
<circle cx="434.5" cy="164.3" r="2.22" fill="#c08440"/>
<circle cx="430.7" cy="161.9" r="2.24" fill="#74c4ba"/>
<circle cx="427.2" cy="158.9" r="2.11" fill="#a86a26"/>
<circle cx="424.3" cy="155.5" r="2.11" fill="#7a440e"/>
<circle cx="421.8" cy="151.7" r="2.25" fill="#fbfaf6"/>
<circle cx="419.9" cy="147.6" r="1.96" fill="#8c5216"/>
<circle cx="418.7" cy="143.3" r="2.12" fill="#b6dfd9"/>
<circle cx="418.0" cy="138.9" r="2.20" fill="#a86a26"/>
<circle cx="418.0" cy="134.4" r="1.98" fill="#a86a26"/>
<circle cx="441.3" cy="163.2" r="1.71" fill="#8c5216"/>
<circle cx="437.8" cy="161.8" r="1.72" fill="#74c4ba"/>
<circle cx="434.5" cy="160.0" r="1.61" fill="#7a440e"/>
<circle cx="431.5" cy="157.8" r="1.64" fill="#8c5216"/>
<circle cx="428.8" cy="155.2" r="1.65" fill="#efe2c4"/>
<circle cx="426.5" cy="152.3" r="1.74" fill="#fbfaf6"/>
<circle cx="424.6" cy="149.1" r="1.82" fill="#fbfaf6"/>
<circle cx="423.2" cy="145.7" r="1.84" fill="#74c4ba"/>
<circle cx="422.2" cy="142.1" r="1.70" fill="#8c5216"/>
<circle cx="421.7" cy="138.4" r="1.71" fill="#7a440e"/>
<circle cx="421.7" cy="134.7" r="1.73" fill="#a86a26"/>
<circle cx="422.2" cy="131.0" r="1.82" fill="#a86a26"/>
<circle cx="423.1" cy="127.4" r="1.63" fill="#fbfaf6"/>
<circle cx="424.6" cy="124.0" r="1.74" fill="#7a440e"/>
<circle cx="426.5" cy="120.7" r="1.76" fill="#a86a26"/>
<circle cx="428.8" cy="117.8" r="1.69" fill="#7a440e"/>
<circle cx="431.5" cy="115.2" r="1.65" fill="#8c5216"/>
<circle cx="434.5" cy="113.0" r="1.74" fill="#8c5216"/>
<circle cx="437.7" cy="111.2" r="1.82" fill="#a86a26"/>
<circle cx="441.2" cy="109.9" r="1.61" fill="#a86a26"/>
<circle cx="444.8" cy="109.0" r="1.63" fill="#d8ac68"/>
<circle cx="448.5" cy="108.6" r="1.66" fill="#a86a26"/>
<circle cx="452.3" cy="108.7" r="1.77" fill="#a86a26"/>
<circle cx="455.9" cy="109.4" r="1.70" fill="#7a440e"/>
<circle cx="459.5" cy="110.5" r="1.69" fill="#fbfaf6"/>
<circle cx="462.9" cy="112.0" r="1.75" fill="#7a440e"/>
<circle cx="466.0" cy="114.0" r="1.80" fill="#8c5216"/>
<circle cx="468.9" cy="116.4" r="1.61" fill="#a86a26"/>
<circle cx="471.4" cy="119.2" r="1.82" fill="#8c5216"/>
<circle cx="473.5" cy="122.2" r="1.70" fill="#2e8c86"/>
<circle cx="475.2" cy="125.6" r="1.79" fill="#efe2c4"/>
<circle cx="476.4" cy="129.1" r="1.79" fill="#8c5216"/>
<circle cx="477.1" cy="132.7" r="1.85" fill="#2e8c86"/>
<circle cx="477.4" cy="136.5" r="1.75" fill="#8c5216"/>
<circle cx="477.2" cy="140.2" r="1.82" fill="#efe2c4"/>
<circle cx="476.4" cy="143.8" r="1.78" fill="#c08440"/>
<circle cx="475.2" cy="147.4" r="1.69" fill="#b6dfd9"/>
<circle cx="473.5" cy="150.7" r="1.84" fill="#efe2c4"/>
<circle cx="471.4" cy="153.8" r="1.86" fill="#8c5216"/>
<circle cx="468.9" cy="156.5" r="1.72" fill="#a86a26"/>
<circle cx="466.1" cy="158.9" r="1.81" fill="#a86a26"/>
<circle cx="462.9" cy="160.9" r="1.80" fill="#efe2c4"/>
<circle cx="459.6" cy="162.5" r="1.83" fill="#8c5216"/>
<circle cx="456.0" cy="163.6" r="1.78" fill="#74c4ba"/>
<circle cx="452.3" cy="164.3" r="1.67" fill="#a86a26"/>
<circle cx="448.6" cy="164.4" r="1.62" fill="#d8ac68"/>
<circle cx="444.9" cy="164.0" r="1.71" fill="#7a440e"/>
<circle cx="473.3" cy="129.3" r="1.48" fill="#a86a26"/>
<circle cx="474.0" cy="132.4" r="1.48" fill="#74c4ba"/>
<circle cx="474.3" cy="135.5" r="1.34" fill="#c08440"/>
<circle cx="474.2" cy="138.6" r="1.43" fill="#d8ac68"/>
<circle cx="473.8" cy="141.7" r="1.55" fill="#7a440e"/>
<circle cx="472.9" cy="144.7" r="1.55" fill="#7a440e"/>
<circle cx="471.7" cy="147.5" r="1.35" fill="#8c5216"/>
<circle cx="470.2" cy="150.2" r="1.34" fill="#a86a26"/>
<circle cx="468.3" cy="152.7" r="1.47" fill="#8c5216"/>
<circle cx="466.1" cy="155.0" r="1.47" fill="#a86a26"/>
<circle cx="463.7" cy="156.9" r="1.40" fill="#c08440"/>
<circle cx="461.0" cy="158.5" r="1.38" fill="#7a440e"/>
<circle cx="458.1" cy="159.8" r="1.46" fill="#b6dfd9"/>
<circle cx="455.2" cy="160.7" r="1.37" fill="#fbfaf6"/>
<circle cx="452.1" cy="161.2" r="1.53" fill="#2e8c86"/>
<circle cx="449.0" cy="161.3" r="1.44" fill="#a86a26"/>
<circle cx="445.9" cy="161.1" r="1.44" fill="#fbfaf6"/>
<circle cx="442.8" cy="160.4" r="1.48" fill="#2e8c86"/>
<circle cx="439.9" cy="159.4" r="1.49" fill="#a86a26"/>
<circle cx="437.1" cy="158.0" r="1.44" fill="#74c4ba"/>
<circle cx="434.5" cy="156.3" r="1.48" fill="#fbfaf6"/>
<circle cx="432.1" cy="154.2" r="1.36" fill="#d8ac68"/>
<circle cx="430.0" cy="151.9" r="1.51" fill="#c08440"/>
<circle cx="428.3" cy="149.4" r="1.36" fill="#2e8c86"/>
<circle cx="426.8" cy="146.6" r="1.47" fill="#d8ac68"/>
<circle cx="425.7" cy="143.7" r="1.37" fill="#efe2c4"/>
<circle cx="425.0" cy="140.6" r="1.49" fill="#fbfaf6"/>
<circle cx="424.7" cy="137.5" r="1.55" fill="#efe2c4"/>
<circle cx="424.8" cy="134.4" r="1.34" fill="#efe2c4"/>
<circle cx="425.2" cy="131.3" r="1.49" fill="#a86a26"/>
<circle cx="426.1" cy="128.3" r="1.55" fill="#8c5216"/>
<circle cx="427.3" cy="125.5" r="1.51" fill="#2e8c86"/>
<circle cx="428.8" cy="122.8" r="1.34" fill="#8c5216"/>
<circle cx="430.7" cy="120.3" r="1.45" fill="#b6dfd9"/>
<circle cx="432.9" cy="118.0" r="1.45" fill="#d8ac68"/>
<circle cx="435.3" cy="116.1" r="1.42" fill="#74c4ba"/>
<circle cx="438.0" cy="114.5" r="1.38" fill="#74c4ba"/>
<circle cx="440.9" cy="113.2" r="1.49" fill="#7a440e"/>
<circle cx="443.8" cy="112.3" r="1.44" fill="#a86a26"/>
<circle cx="446.9" cy="111.8" r="1.41" fill="#b6dfd9"/>
<circle cx="450.0" cy="111.7" r="1.54" fill="#2e8c86"/>
<circle cx="453.1" cy="111.9" r="1.40" fill="#7a440e"/>
<circle cx="456.2" cy="112.6" r="1.47" fill="#74c4ba"/>
<circle cx="459.1" cy="113.6" r="1.36" fill="#74c4ba"/>
<circle cx="461.9" cy="115.0" r="1.44" fill="#c08440"/>
<circle cx="464.5" cy="116.7" r="1.44" fill="#74c4ba"/>
<circle cx="466.9" cy="118.8" r="1.39" fill="#8c5216"/>
<circle cx="469.0" cy="121.1" r="1.53" fill="#74c4ba"/>
<circle cx="470.7" cy="123.6" r="1.36" fill="#efe2c4"/>
<circle cx="472.2" cy="126.4" r="1.53" fill="#74c4ba"/>
<circle cx="444.4" cy="158.1" r="1.19" fill="#d8ac68"/>
<circle cx="441.8" cy="157.4" r="1.27" fill="#8c5216"/>
<circle cx="439.4" cy="156.3" r="1.15" fill="#8c5216"/>
<circle cx="437.1" cy="155.0" r="1.15" fill="#b6dfd9"/>
<circle cx="435.0" cy="153.4" r="1.28" fill="#74c4ba"/>
<circle cx="433.1" cy="151.6" r="1.20" fill="#a86a26"/>
<circle cx="431.5" cy="149.5" r="1.26" fill="#a86a26"/>
<circle cx="430.1" cy="147.3" r="1.27" fill="#7a440e"/>
<circle cx="428.9" cy="144.9" r="1.23" fill="#efe2c4"/>
<circle cx="428.1" cy="142.4" r="1.26" fill="#c08440"/>
<circle cx="427.5" cy="139.9" r="1.18" fill="#a86a26"/>
<circle cx="427.3" cy="137.2" r="1.18" fill="#2e8c86"/>
<circle cx="427.3" cy="134.6" r="1.27" fill="#7a440e"/>
<circle cx="427.7" cy="132.0" r="1.14" fill="#a86a26"/>
<circle cx="428.4" cy="129.5" r="1.16" fill="#fbfaf6"/>
<circle cx="429.4" cy="127.0" r="1.24" fill="#efe2c4"/>
<circle cx="430.6" cy="124.7" r="1.20" fill="#74c4ba"/>
<circle cx="432.2" cy="122.5" r="1.28" fill="#efe2c4"/>
<circle cx="433.9" cy="120.6" r="1.20" fill="#8c5216"/>
<circle cx="435.9" cy="118.9" r="1.20" fill="#74c4ba"/>
<circle cx="438.1" cy="117.4" r="1.15" fill="#7a440e"/>
<circle cx="440.5" cy="116.2" r="1.20" fill="#8c5216"/>
<circle cx="442.9" cy="115.3" r="1.20" fill="#d8ac68"/>
<circle cx="445.5" cy="114.6" r="1.22" fill="#a86a26"/>
<circle cx="448.1" cy="114.3" r="1.31" fill="#b6dfd9"/>
<circle cx="450.7" cy="114.3" r="1.18" fill="#fbfaf6"/>
<circle cx="453.4" cy="114.6" r="1.16" fill="#fbfaf6"/>
<circle cx="455.9" cy="115.2" r="1.28" fill="#8c5216"/>
<circle cx="458.4" cy="116.1" r="1.16" fill="#a86a26"/>
<circle cx="460.7" cy="117.3" r="1.16" fill="#74c4ba"/>
<circle cx="462.9" cy="118.8" r="1.16" fill="#a86a26"/>
<circle cx="464.9" cy="120.5" r="1.26" fill="#b6dfd9"/>
<circle cx="466.7" cy="122.4" r="1.15" fill="#a86a26"/>
<circle cx="468.3" cy="124.6" r="1.16" fill="#b6dfd9"/>
<circle cx="469.5" cy="126.9" r="1.26" fill="#2e8c86"/>
<circle cx="470.5" cy="129.3" r="1.22" fill="#fbfaf6"/>
<circle cx="471.2" cy="131.8" r="1.19" fill="#c08440"/>
<circle cx="471.6" cy="134.4" r="1.16" fill="#fbfaf6"/>
<circle cx="471.7" cy="137.1" r="1.18" fill="#d8ac68"/>
<circle cx="471.5" cy="139.7" r="1.30" fill="#c08440"/>
<circle cx="471.0" cy="142.3" r="1.25" fill="#efe2c4"/>
<circle cx="470.1" cy="144.8" r="1.13" fill="#fbfaf6"/>
<circle cx="469.0" cy="147.2" r="1.29" fill="#74c4ba"/>
<circle cx="467.6" cy="149.4" r="1.23" fill="#2e8c86"/>
<circle cx="466.0" cy="151.5" r="1.31" fill="#b6dfd9"/>
<circle cx="464.1" cy="153.3" r="1.16" fill="#a86a26"/>
<circle cx="462.0" cy="154.9" r="1.14" fill="#c08440"/>
<circle cx="459.7" cy="156.3" r="1.15" fill="#a86a26"/>
<circle cx="457.3" cy="157.3" r="1.21" fill="#8c5216"/>
<circle cx="454.8" cy="158.1" r="1.22" fill="#8c5216"/>
<circle cx="452.2" cy="158.6" r="1.26" fill="#b6dfd9"/>
<circle cx="449.6" cy="158.7" r="1.27" fill="#8c5216"/>
<circle cx="446.9" cy="158.6" r="1.28" fill="#a86a26"/>
<circle cx="437.1" cy="120.8" r="1.04" fill="#ffffff"/>
<circle cx="438.9" cy="119.5" r="1.00" fill="#6a3a0a"/>
<circle cx="440.9" cy="118.4" r="1.00" fill="#6a3a0a"/>
<circle cx="443.0" cy="117.5" r="1.00" fill="#7e4610"/>
<circle cx="445.2" cy="116.9" r="1.10" fill="#7e4610"/>
<circle cx="447.4" cy="116.6" r="1.06" fill="#7e4610"/>
<circle cx="449.6" cy="116.5" r="1.02" fill="#9c6020"/>
<circle cx="451.9" cy="116.6" r="1.05" fill="#6cbcb2"/>
<circle cx="454.1" cy="117.0" r="1.08" fill="#9c6020"/>
<circle cx="456.2" cy="117.6" r="0.97" fill="#7e4610"/>
<circle cx="458.3" cy="118.5" r="1.10" fill="#2a8680"/>
<circle cx="460.3" cy="119.6" r="1.08" fill="#6cbcb2"/>
<circle cx="462.1" cy="120.9" r="1.11" fill="#6a3a0a"/>
<circle cx="463.8" cy="122.4" r="0.99" fill="#ffffff"/>
<circle cx="465.2" cy="124.1" r="1.03" fill="#ffffff"/>
<circle cx="466.5" cy="125.9" r="1.02" fill="#2a8680"/>
<circle cx="467.6" cy="127.9" r="1.00" fill="#7e4610"/>
<circle cx="468.5" cy="130.0" r="1.08" fill="#7e4610"/>
<circle cx="469.1" cy="132.2" r="1.05" fill="#2a8680"/>
<circle cx="469.4" cy="134.4" r="1.08" fill="#9c6020"/>
<circle cx="469.5" cy="136.6" r="1.04" fill="#e9dcc0"/>
<circle cx="469.4" cy="138.9" r="1.12" fill="#9c6020"/>
<circle cx="469.0" cy="141.1" r="1.04" fill="#e9dcc0"/>
<circle cx="468.4" cy="143.2" r="1.04" fill="#9c6020"/>
<circle cx="467.5" cy="145.3" r="1.03" fill="#e9dcc0"/>
<circle cx="466.4" cy="147.3" r="1.02" fill="#6cbcb2"/>
<circle cx="465.1" cy="149.1" r="1.07" fill="#ffffff"/>
<circle cx="463.6" cy="150.8" r="1.10" fill="#7e4610"/>
<circle cx="461.9" cy="152.2" r="1.01" fill="#7e4610"/>
<circle cx="460.1" cy="153.5" r="0.99" fill="#a8d8d0"/>
<circle cx="458.1" cy="154.6" r="1.03" fill="#9c6020"/>
<circle cx="456.0" cy="155.5" r="1.12" fill="#6a3a0a"/>
<circle cx="453.8" cy="156.1" r="1.07" fill="#9c6020"/>
<circle cx="451.6" cy="156.4" r="1.05" fill="#a8d8d0"/>
<circle cx="449.4" cy="156.5" r="0.99" fill="#9c6020"/>
<circle cx="447.1" cy="156.4" r="0.97" fill="#7e4610"/>
<circle cx="444.9" cy="156.0" r="1.08" fill="#7e4610"/>
<circle cx="442.8" cy="155.4" r="0.98" fill="#ffffff"/>
<circle cx="440.7" cy="154.5" r="1.12" fill="#6a3a0a"/>
<circle cx="438.7" cy="153.4" r="1.02" fill="#b8823e"/>
<circle cx="436.9" cy="152.1" r="1.07" fill="#a8d8d0"/>
<circle cx="435.2" cy="150.6" r="1.00" fill="#6cbcb2"/>
<circle cx="433.8" cy="148.9" r="1.04" fill="#6cbcb2"/>
<circle cx="432.5" cy="147.1" r="0.97" fill="#7e4610"/>
<circle cx="431.4" cy="145.1" r="1.00" fill="#9c6020"/>
<circle cx="430.5" cy="143.0" r="1.11" fill="#9c6020"/>
<circle cx="429.9" cy="140.8" r="1.00" fill="#b8823e"/>
<circle cx="429.6" cy="138.6" r="0.98" fill="#7e4610"/>
<circle cx="429.5" cy="136.4" r="1.03" fill="#b8823e"/>
<circle cx="429.6" cy="134.1" r="1.05" fill="#7e4610"/>
<circle cx="430.0" cy="131.9" r="0.97" fill="#b8823e"/>
<circle cx="430.6" cy="129.8" r="0.99" fill="#e9dcc0"/>
<circle cx="431.5" cy="127.7" r="1.08" fill="#7e4610"/>
<circle cx="432.6" cy="125.7" r="1.02" fill="#b8823e"/>
<circle cx="433.9" cy="123.9" r="1.08" fill="#ffffff"/>
<circle cx="435.4" cy="122.2" r="1.12" fill="#2a8680"/>
<circle cx="445.6" cy="118.8" r="1.01" fill="#b8823e"/>
<circle cx="447.6" cy="118.5" r="0.90" fill="#7e4610"/>
<circle cx="449.6" cy="118.4" r="0.93" fill="#7e4610"/>
<circle cx="451.7" cy="118.5" r="0.93" fill="#b8823e"/>
<circle cx="453.7" cy="118.9" r="0.92" fill="#2a8680"/>
<circle cx="455.6" cy="119.4" r="0.97" fill="#e9dcc0"/>
<circle cx="457.5" cy="120.2" r="1.01" fill="#6a3a0a"/>
<circle cx="459.3" cy="121.2" r="0.93" fill="#b8823e"/>
<circle cx="460.9" cy="122.4" r="0.99" fill="#6a3a0a"/>
<circle cx="462.4" cy="123.8" r="0.89" fill="#a8d8d0"/>
<circle cx="463.8" cy="125.3" r="0.93" fill="#9c6020"/>
<circle cx="464.9" cy="127.0" r="0.94" fill="#9c6020"/>
<circle cx="465.9" cy="128.8" r="0.93" fill="#6a3a0a"/>
<circle cx="466.7" cy="130.7" r="0.92" fill="#e9dcc0"/>
<circle cx="467.2" cy="132.6" r="0.95" fill="#ffffff"/>
<circle cx="467.5" cy="134.6" r="0.88" fill="#7e4610"/>
<circle cx="467.6" cy="136.6" r="0.99" fill="#6cbcb2"/>
<circle cx="467.5" cy="138.7" r="0.90" fill="#9c6020"/>
<circle cx="467.1" cy="140.7" r="0.96" fill="#7e4610"/>
<circle cx="466.6" cy="142.6" r="1.01" fill="#ffffff"/>
<circle cx="465.8" cy="144.5" r="0.96" fill="#2a8680"/>
<circle cx="464.8" cy="146.3" r="1.00" fill="#ffffff"/>
<circle cx="463.6" cy="147.9" r="0.90" fill="#6a3a0a"/>
<circle cx="462.2" cy="149.4" r="0.89" fill="#7e4610"/>
<circle cx="460.7" cy="150.8" r="1.00" fill="#7e4610"/>
<circle cx="459.0" cy="151.9" r="0.95" fill="#6a3a0a"/>
<circle cx="457.2" cy="152.9" r="0.97" fill="#6cbcb2"/>
<circle cx="455.3" cy="153.7" r="0.93" fill="#2a8680"/>
<circle cx="453.4" cy="154.2" r="0.92" fill="#6a3a0a"/>
<circle cx="451.4" cy="154.5" r="0.88" fill="#7e4610"/>
<circle cx="449.4" cy="154.6" r="0.99" fill="#6cbcb2"/>
<circle cx="447.3" cy="154.5" r="0.99" fill="#a8d8d0"/>
<circle cx="445.3" cy="154.1" r="0.93" fill="#9c6020"/>
<circle cx="443.4" cy="153.6" r="1.00" fill="#9c6020"/>
<circle cx="441.5" cy="152.8" r="0.92" fill="#7e4610"/>
<circle cx="439.7" cy="151.8" r="0.97" fill="#2a8680"/>
<circle cx="438.1" cy="150.6" r="0.89" fill="#7e4610"/>
<circle cx="436.6" cy="149.2" r="0.91" fill="#7e4610"/>
<circle cx="435.2" cy="147.7" r="0.88" fill="#e9dcc0"/>
<circle cx="434.1" cy="146.0" r="0.94" fill="#a8d8d0"/>
<circle cx="433.1" cy="144.2" r="0.93" fill="#2a8680"/>
<circle cx="432.3" cy="142.3" r="0.89" fill="#a8d8d0"/>
<circle cx="431.8" cy="140.4" r="0.91" fill="#a8d8d0"/>
<circle cx="431.5" cy="138.4" r="0.95" fill="#e9dcc0"/>
<circle cx="431.4" cy="136.4" r="0.95" fill="#2a8680"/>
<circle cx="431.5" cy="134.3" r="0.88" fill="#6cbcb2"/>
<circle cx="431.9" cy="132.3" r="0.95" fill="#ffffff"/>
<circle cx="432.4" cy="130.4" r="0.89" fill="#ffffff"/>
<circle cx="433.2" cy="128.5" r="0.89" fill="#2a8680"/>
<circle cx="434.2" cy="126.7" r="0.88" fill="#7e4610"/>
<circle cx="435.4" cy="125.1" r="0.90" fill="#6a3a0a"/>
<circle cx="436.8" cy="123.6" r="0.88" fill="#2a8680"/>
<circle cx="438.3" cy="122.2" r="0.91" fill="#ffffff"/>
<circle cx="440.0" cy="121.1" r="0.98" fill="#ffffff"/>
<circle cx="441.8" cy="120.1" r="0.95" fill="#2a8680"/>
<circle cx="443.7" cy="119.3" r="0.87" fill="#6cbcb2"/>
<circle cx="464.9" cy="142.0" r="0.93" fill="#9c6020"/>
<circle cx="464.1" cy="143.8" r="0.87" fill="#6cbcb2"/>
<circle cx="463.1" cy="145.6" r="0.94" fill="#9c6020"/>
<circle cx="461.9" cy="147.2" r="0.88" fill="#9c6020"/>
<circle cx="460.5" cy="148.6" r="0.87" fill="#9c6020"/>
<circle cx="458.9" cy="149.8" r="0.98" fill="#7e4610"/>
<circle cx="457.2" cy="150.9" r="0.96" fill="#9c6020"/>
<circle cx="455.3" cy="151.7" r="0.97" fill="#9c6020"/>
<circle cx="453.4" cy="152.3" r="0.87" fill="#a8d8d0"/>
<circle cx="451.5" cy="152.7" r="0.99" fill="#ffffff"/>
<circle cx="449.5" cy="152.8" r="0.88" fill="#6cbcb2"/>
<circle cx="447.4" cy="152.7" r="0.97" fill="#6cbcb2"/>
<circle cx="445.5" cy="152.3" r="0.96" fill="#7e4610"/>
<circle cx="443.6" cy="151.7" r="0.89" fill="#ffffff"/>
<circle cx="441.7" cy="150.9" r="0.98" fill="#a8d8d0"/>
<circle cx="440.0" cy="149.8" r="0.93" fill="#7e4610"/>
<circle cx="438.5" cy="148.5" r="0.87" fill="#ffffff"/>
<circle cx="437.1" cy="147.1" r="1.00" fill="#e9dcc0"/>
<circle cx="435.9" cy="145.5" r="0.93" fill="#9c6020"/>
<circle cx="434.9" cy="143.7" r="0.99" fill="#6a3a0a"/>
<circle cx="434.1" cy="141.9" r="0.88" fill="#6a3a0a"/>
<circle cx="433.5" cy="139.9" r="0.91" fill="#6a3a0a"/>
<circle cx="433.2" cy="138.0" r="0.89" fill="#b8823e"/>
<circle cx="433.2" cy="135.9" r="0.95" fill="#6cbcb2"/>
<circle cx="433.4" cy="133.9" r="0.93" fill="#e9dcc0"/>
<circle cx="433.8" cy="132.0" r="0.95" fill="#e9dcc0"/>
<circle cx="434.5" cy="130.1" r="0.97" fill="#7e4610"/>
<circle cx="435.4" cy="128.3" r="0.87" fill="#9c6020"/>
<circle cx="436.5" cy="126.6" r="0.88" fill="#6a3a0a"/>
<circle cx="437.8" cy="125.1" r="0.97" fill="#6cbcb2"/>
<circle cx="439.3" cy="123.8" r="0.95" fill="#b8823e"/>
<circle cx="441.0" cy="122.6" r="0.89" fill="#9c6020"/>
<circle cx="442.7" cy="121.7" r="0.97" fill="#a8d8d0"/>
<circle cx="444.6" cy="120.9" r="0.93" fill="#6cbcb2"/>
<circle cx="446.6" cy="120.5" r="0.97" fill="#7e4610"/>
<circle cx="448.5" cy="120.2" r="0.91" fill="#6a3a0a"/>
<circle cx="450.6" cy="120.2" r="0.88" fill="#ffffff"/>
<circle cx="452.5" cy="120.5" r="0.96" fill="#6a3a0a"/>
<circle cx="454.5" cy="121.0" r="0.96" fill="#7e4610"/>
<circle cx="456.4" cy="121.7" r="0.93" fill="#2a8680"/>
<circle cx="458.1" cy="122.7" r="0.99" fill="#ffffff"/>
<circle cx="459.8" cy="123.8" r="0.93" fill="#2a8680"/>
<circle cx="461.2" cy="125.2" r="0.95" fill="#6a3a0a"/>
<circle cx="462.6" cy="126.7" r="0.94" fill="#6cbcb2"/>
<circle cx="463.7" cy="128.4" r="0.97" fill="#6cbcb2"/>
<circle cx="464.5" cy="130.2" r="0.93" fill="#e9dcc0"/>
<circle cx="465.2" cy="132.1" r="0.96" fill="#9c6020"/>
<circle cx="465.6" cy="134.0" r="0.92" fill="#6cbcb2"/>
<circle cx="465.8" cy="136.0" r="0.96" fill="#7e4610"/>
<circle cx="465.7" cy="138.1" r="0.95" fill="#2a8680"/>
<circle cx="465.4" cy="140.0" r="0.99" fill="#7e4610"/>
<circle cx="447.5" cy="122.1" r="0.89" fill="#6cbcb2"/>
<circle cx="449.5" cy="122.0" r="0.95" fill="#9c6020"/>
<circle cx="451.6" cy="122.1" r="1.01" fill="#7e4610"/>
<circle cx="453.5" cy="122.6" r="0.89" fill="#7e4610"/>
<circle cx="455.4" cy="123.3" r="0.90" fill="#6cbcb2"/>
<circle cx="457.2" cy="124.2" r="0.96" fill="#ffffff"/>
<circle cx="458.9" cy="125.4" r="0.88" fill="#9c6020"/>
<circle cx="460.3" cy="126.8" r="0.99" fill="#2a8680"/>
<circle cx="461.6" cy="128.4" r="0.89" fill="#6cbcb2"/>
<circle cx="462.6" cy="130.2" r="0.93" fill="#9c6020"/>
<circle cx="463.3" cy="132.1" r="1.00" fill="#7e4610"/>
<circle cx="463.8" cy="134.0" r="1.01" fill="#a8d8d0"/>
<circle cx="464.0" cy="136.0" r="0.99" fill="#6a3a0a"/>
<circle cx="463.9" cy="138.1" r="0.96" fill="#9c6020"/>
<circle cx="463.6" cy="140.1" r="0.87" fill="#a8d8d0"/>
<circle cx="462.9" cy="142.0" r="1.01" fill="#7e4610"/>
<circle cx="462.0" cy="143.8" r="1.00" fill="#7e4610"/>
<circle cx="460.9" cy="145.5" r="0.91" fill="#b8823e"/>
<circle cx="459.5" cy="147.0" r="1.00" fill="#b8823e"/>
<circle cx="458.0" cy="148.3" r="0.89" fill="#2a8680"/>
<circle cx="456.3" cy="149.3" r="0.92" fill="#a8d8d0"/>
<circle cx="454.4" cy="150.2" r="0.94" fill="#a8d8d0"/>
<circle cx="452.5" cy="150.7" r="0.95" fill="#a8d8d0"/>
<circle cx="450.5" cy="151.0" r="1.01" fill="#b8823e"/>
<circle cx="448.4" cy="151.0" r="0.95" fill="#6a3a0a"/>
<circle cx="446.4" cy="150.7" r="0.96" fill="#e9dcc0"/>
<circle cx="444.5" cy="150.1" r="0.91" fill="#2a8680"/>
<circle cx="442.6" cy="149.3" r="0.93" fill="#6a3a0a"/>
<circle cx="440.9" cy="148.2" r="0.95" fill="#6a3a0a"/>
<circle cx="439.4" cy="146.9" r="1.00" fill="#6a3a0a"/>
<circle cx="438.0" cy="145.4" r="0.88" fill="#9c6020"/>
<circle cx="436.9" cy="143.7" r="0.95" fill="#ffffff"/>
<circle cx="436.0" cy="141.9" r="0.92" fill="#9c6020"/>
<circle cx="435.4" cy="140.0" r="0.88" fill="#9c6020"/>
<circle cx="435.1" cy="138.0" r="0.94" fill="#e9dcc0"/>
<circle cx="435.0" cy="135.9" r="0.99" fill="#b8823e"/>
<circle cx="435.2" cy="133.9" r="0.98" fill="#b8823e"/>
<circle cx="435.7" cy="132.0" r="0.94" fill="#6cbcb2"/>
<circle cx="436.5" cy="130.1" r="0.90" fill="#e9dcc0"/>
<circle cx="437.5" cy="128.3" r="0.99" fill="#2a8680"/>
<circle cx="438.7" cy="126.8" r="0.98" fill="#6a3a0a"/>
<circle cx="440.2" cy="125.4" r="0.95" fill="#6a3a0a"/>
<circle cx="441.8" cy="124.2" r="1.01" fill="#e9dcc0"/>
<circle cx="443.6" cy="123.2" r="0.88" fill="#2a8680"/>
<circle cx="445.5" cy="122.5" r="0.96" fill="#a8d8d0"/>
<circle cx="457.3" cy="126.5" r="0.97" fill="#b8823e"/>
<circle cx="458.8" cy="127.9" r="0.97" fill="#ffffff"/>
<circle cx="460.1" cy="129.5" r="0.94" fill="#a8d8d0"/>
<circle cx="461.1" cy="131.3" r="1.01" fill="#2a8680"/>
<circle cx="461.8" cy="133.2" r="1.00" fill="#7e4610"/>
<circle cx="462.1" cy="135.2" r="0.94" fill="#2a8680"/>
<circle cx="462.2" cy="137.3" r="0.95" fill="#7e4610"/>
<circle cx="461.9" cy="139.3" r="0.91" fill="#7e4610"/>
<circle cx="461.3" cy="141.2" r="0.97" fill="#e9dcc0"/>
<circle cx="460.4" cy="143.1" r="0.97" fill="#6a3a0a"/>
<circle cx="459.2" cy="144.7" r="0.96" fill="#6cbcb2"/>
<circle cx="457.7" cy="146.2" r="0.93" fill="#7e4610"/>
<circle cx="456.1" cy="147.4" r="0.97" fill="#7e4610"/>
<circle cx="454.2" cy="148.3" r="0.97" fill="#9c6020"/>
<circle cx="452.3" cy="148.9" r="0.89" fill="#9c6020"/>
<circle cx="450.3" cy="149.2" r="1.01" fill="#9c6020"/>
<circle cx="448.2" cy="149.1" r="0.97" fill="#e9dcc0"/>
<circle cx="446.2" cy="148.8" r="0.95" fill="#ffffff"/>
<circle cx="444.3" cy="148.1" r="1.01" fill="#2a8680"/>
<circle cx="442.5" cy="147.1" r="0.99" fill="#2a8680"/>
<circle cx="440.9" cy="145.8" r="0.92" fill="#b8823e"/>
<circle cx="439.5" cy="144.3" r="0.96" fill="#7e4610"/>
<circle cx="438.4" cy="142.6" r="0.92" fill="#7e4610"/>
<circle cx="437.5" cy="140.8" r="0.93" fill="#e9dcc0"/>
<circle cx="437.0" cy="138.8" r="0.94" fill="#9c6020"/>
<circle cx="436.8" cy="136.8" r="0.96" fill="#6a3a0a"/>
<circle cx="436.9" cy="134.7" r="1.02" fill="#2a8680"/>
<circle cx="437.4" cy="132.7" r="1.02" fill="#2a8680"/>
<circle cx="438.1" cy="130.8" r="0.99" fill="#2a8680"/>
<circle cx="439.2" cy="129.1" r="1.02" fill="#ffffff"/>
<circle cx="440.5" cy="127.5" r="0.93" fill="#ffffff"/>
<circle cx="442.1" cy="126.2" r="0.89" fill="#2a8680"/>
<circle cx="443.8" cy="125.1" r="1.01" fill="#b8823e"/>
<circle cx="445.7" cy="124.4" r="0.94" fill="#7e4610"/>
<circle cx="447.7" cy="123.9" r="0.97" fill="#9c6020"/>
<circle cx="449.8" cy="123.8" r="0.93" fill="#a8d8d0"/>
<circle cx="451.8" cy="124.0" r="0.88" fill="#ffffff"/>
<circle cx="453.8" cy="124.5" r="0.94" fill="#9c6020"/>
<circle cx="455.6" cy="125.4" r="1.00" fill="#2a8680"/>
<circle cx="457.8" cy="129.4" r="0.90" fill="#e9dcc0"/>
<circle cx="458.9" cy="131.1" r="0.98" fill="#a8d8d0"/>
<circle cx="459.8" cy="132.9" r="0.96" fill="#6cbcb2"/>
<circle cx="460.3" cy="134.8" r="0.92" fill="#2a8680"/>
<circle cx="460.4" cy="136.8" r="0.92" fill="#ffffff"/>
<circle cx="460.1" cy="138.8" r="0.99" fill="#2a8680"/>
<circle cx="459.5" cy="140.8" r="0.97" fill="#9c6020"/>
<circle cx="458.6" cy="142.5" r="0.88" fill="#7e4610"/>
<circle cx="457.3" cy="144.1" r="0.90" fill="#9c6020"/>
<circle cx="455.8" cy="145.4" r="0.92" fill="#b8823e"/>
<circle cx="454.0" cy="146.4" r="0.87" fill="#6a3a0a"/>
<circle cx="452.1" cy="147.1" r="0.90" fill="#a8d8d0"/>
<circle cx="450.2" cy="147.4" r="0.93" fill="#9c6020"/>
<circle cx="448.2" cy="147.3" r="0.94" fill="#e9dcc0"/>
<circle cx="446.2" cy="146.9" r="0.95" fill="#7e4610"/>
<circle cx="444.3" cy="146.1" r="0.89" fill="#7e4610"/>
<circle cx="442.7" cy="145.0" r="0.94" fill="#9c6020"/>
<circle cx="441.2" cy="143.6" r="0.87" fill="#6cbcb2"/>
<circle cx="440.1" cy="141.9" r="0.92" fill="#7e4610"/>
<circle cx="439.2" cy="140.1" r="0.96" fill="#9c6020"/>
<circle cx="438.7" cy="138.2" r="0.99" fill="#6cbcb2"/>
<circle cx="438.6" cy="136.2" r="1.00" fill="#6a3a0a"/>
<circle cx="438.9" cy="134.2" r="0.94" fill="#9c6020"/>
<circle cx="439.5" cy="132.2" r="0.94" fill="#7e4610"/>
<circle cx="440.4" cy="130.5" r="0.95" fill="#2a8680"/>
<circle cx="441.7" cy="128.9" r="0.92" fill="#6a3a0a"/>
<circle cx="443.2" cy="127.6" r="0.99" fill="#b8823e"/>
<circle cx="445.0" cy="126.6" r="0.89" fill="#6cbcb2"/>
<circle cx="446.9" cy="125.9" r="0.97" fill="#b8823e"/>
<circle cx="448.8" cy="125.6" r="0.98" fill="#7e4610"/>
<circle cx="450.8" cy="125.7" r="0.95" fill="#a8d8d0"/>
<circle cx="452.8" cy="126.1" r="0.94" fill="#7e4610"/>
<circle cx="454.7" cy="126.9" r="0.99" fill="#7e4610"/>
<circle cx="456.3" cy="128.0" r="0.87" fill="#9c6020"/>
<circle cx="440.8" cy="139.3" r="1.00" fill="#9c6020"/>
<circle cx="440.5" cy="137.3" r="0.89" fill="#7e4610"/>
<circle cx="440.5" cy="135.2" r="0.94" fill="#b8823e"/>
<circle cx="441.0" cy="133.3" r="1.01" fill="#ffffff"/>
<circle cx="442.0" cy="131.5" r="1.00" fill="#b8823e"/>
<circle cx="443.3" cy="129.9" r="0.94" fill="#7e4610"/>
<circle cx="444.9" cy="128.7" r="0.99" fill="#a8d8d0"/>
<circle cx="446.7" cy="127.8" r="0.89" fill="#2a8680"/>
<circle cx="448.7" cy="127.5" r="0.93" fill="#6a3a0a"/>
<circle cx="450.8" cy="127.5" r="0.89" fill="#2a8680"/>
<circle cx="452.7" cy="128.0" r="0.93" fill="#7e4610"/>
<circle cx="454.5" cy="129.0" r="0.98" fill="#6cbcb2"/>
<circle cx="456.1" cy="130.3" r="0.91" fill="#b8823e"/>
<circle cx="457.3" cy="131.9" r="0.94" fill="#ffffff"/>
<circle cx="458.2" cy="133.7" r="0.89" fill="#9c6020"/>
<circle cx="458.5" cy="135.7" r="0.89" fill="#7e4610"/>
<circle cx="458.5" cy="137.8" r="1.01" fill="#6cbcb2"/>
<circle cx="458.0" cy="139.7" r="0.97" fill="#6cbcb2"/>
<circle cx="457.0" cy="141.5" r="0.91" fill="#e9dcc0"/>
<circle cx="455.7" cy="143.1" r="0.93" fill="#e9dcc0"/>
<circle cx="454.1" cy="144.3" r="1.01" fill="#a8d8d0"/>
<circle cx="452.3" cy="145.2" r="0.91" fill="#b8823e"/>
<circle cx="450.3" cy="145.5" r="1.01" fill="#6cbcb2"/>
<circle cx="448.2" cy="145.5" r="1.01" fill="#6a3a0a"/>
<circle cx="446.3" cy="145.0" r="0.99" fill="#6cbcb2"/>
<circle cx="444.5" cy="144.0" r="0.97" fill="#e9dcc0"/>
<circle cx="442.9" cy="142.7" r="1.02" fill="#9c6020"/>
<circle cx="441.7" cy="141.1" r="0.98" fill="#9c6020"/>
<circle cx="451.2" cy="129.4" r="0.94" fill="#a8d8d0"/>
<circle cx="453.1" cy="130.2" r="0.89" fill="#e9dcc0"/>
<circle cx="454.7" cy="131.4" r="0.97" fill="#a8d8d0"/>
<circle cx="455.9" cy="133.1" r="0.94" fill="#7e4610"/>
<circle cx="456.6" cy="135.1" r="0.96" fill="#b8823e"/>
<circle cx="456.7" cy="137.1" r="0.93" fill="#9c6020"/>
<circle cx="456.3" cy="139.1" r="1.00" fill="#e9dcc0"/>
<circle cx="455.2" cy="140.9" r="0.95" fill="#e9dcc0"/>
<circle cx="453.8" cy="142.4" r="1.02" fill="#b8823e"/>
<circle cx="451.9" cy="143.3" r="0.99" fill="#6cbcb2"/>
<circle cx="449.9" cy="143.8" r="1.00" fill="#7e4610"/>
<circle cx="447.8" cy="143.6" r="0.99" fill="#b8823e"/>
<circle cx="445.9" cy="142.8" r="0.90" fill="#e9dcc0"/>
<circle cx="444.3" cy="141.6" r="0.99" fill="#ffffff"/>
<circle cx="443.1" cy="139.9" r="0.98" fill="#7e4610"/>
<circle cx="442.4" cy="137.9" r="0.89" fill="#9c6020"/>
<circle cx="442.3" cy="135.9" r="0.95" fill="#7e4610"/>
<circle cx="442.7" cy="133.9" r="0.91" fill="#9c6020"/>
<circle cx="443.8" cy="132.1" r="1.00" fill="#9c6020"/>
<circle cx="445.2" cy="130.6" r="0.97" fill="#e9dcc0"/>
<circle cx="447.1" cy="129.7" r="0.92" fill="#6a3a0a"/>
<circle cx="449.1" cy="129.2" r="0.99" fill="#a8d8d0"/>
<circle cx="448.5" cy="131.2" r="0.94" fill="#6a3a0a"/>
<circle cx="450.6" cy="131.2" r="0.99" fill="#b8823e"/>
<circle cx="452.6" cy="132.0" r="1.06" fill="#ffffff"/>
<circle cx="454.1" cy="133.5" r="0.95" fill="#9c6020"/>
<circle cx="454.8" cy="135.5" r="1.03" fill="#6cbcb2"/>
<circle cx="454.8" cy="137.6" r="0.92" fill="#9c6020"/>
<circle cx="454.0" cy="139.6" r="1.00" fill="#e9dcc0"/>
<circle cx="452.5" cy="141.1" r="1.00" fill="#a8d8d0"/>
<circle cx="450.5" cy="141.8" r="1.03" fill="#ffffff"/>
<circle cx="448.4" cy="141.8" r="1.00" fill="#2a8680"/>
<circle cx="446.4" cy="141.0" r="1.02" fill="#7e4610"/>
<circle cx="444.9" cy="139.5" r="0.99" fill="#b8823e"/>
<circle cx="444.2" cy="137.5" r="1.03" fill="#ffffff"/>
<circle cx="444.2" cy="135.4" r="1.04" fill="#7e4610"/>
<circle cx="445.0" cy="133.4" r="1.03" fill="#7e4610"/>
<circle cx="446.5" cy="131.9" r="0.92" fill="#a8d8d0"/>
<circle cx="446.1" cy="135.4" r="0.91" fill="#a8d8d0"/>
<circle cx="447.2" cy="133.7" r="1.00" fill="#7e4610"/>
<circle cx="449.1" cy="132.9" r="1.01" fill="#9c6020"/>
<circle cx="451.1" cy="133.3" r="1.00" fill="#b8823e"/>
<circle cx="452.6" cy="134.7" r="0.88" fill="#ffffff"/>
<circle cx="453.1" cy="136.6" r="0.95" fill="#9c6020"/>
<circle cx="452.4" cy="138.5" r="0.90" fill="#7e4610"/>
<circle cx="450.9" cy="139.8" r="0.88" fill="#b8823e"/>
<circle cx="448.9" cy="140.0" r="0.94" fill="#6a3a0a"/>
<circle cx="447.1" cy="139.1" r="0.92" fill="#b8823e"/>
<circle cx="446.0" cy="137.4" r="0.95" fill="#7e4610"/>
<circle cx="448.6" cy="135.0" r="0.87" fill="#6cbcb2"/>
<circle cx="450.4" cy="135.0" r="0.81" fill="#a8d8d0"/>
<circle cx="451.3" cy="136.5" r="0.77" fill="#9c6020"/>
<circle cx="450.4" cy="138.0" r="0.84" fill="#2a8680"/>
<circle cx="448.6" cy="138.0" r="0.85" fill="#7e4610"/>
<circle cx="447.7" cy="136.5" r="0.77" fill="#a8d8d0"/></svg>
<div class="b" style="left:346.5px;top:220.6px;width:217.5px;height:1.0999999999999943px;background-image:linear-gradient(to right,#a8a8a8 1.2px,transparent 1.2px);background-size:2.8px 1.1px"></div>
<div class="b" style="left:354.5px;top:222.5px;width:204.5px;height:212.0px;background:#e4ecef"></div>
<div class="b" style="left:359.5px;top:222.5px;width:204.5px;height:212.0px;background:#e4ecef"></div>
<div class="b" style="left:361px;top:226.5px;width:195px;height:204.7px;border:1px solid #cfd8dc;border-bottom-width:1.4px;border-radius:6px;box-sizing:border-box;background:#e7eef1"></div>
<div class="b" style="left:357.5px;top:223.3px;width:10.699999999999989px;height:2.0px;background:#4cc3cf"></div>
<div class="b" style="left:357.5px;top:223.3px;width:2.0px;height:10.199999999999989px;background:#4cc3cf"></div>
<div class="b" style="left:549.4px;top:223.3px;width:9.600000000000023px;height:2.0px;background:#4cc3cf"></div>
<div class="b" style="left:557px;top:223.3px;width:2px;height:10.199999999999989px;background:#4cc3cf"></div>
<div class="b" style="left:357.5px;top:432.5px;width:10.699999999999989px;height:2.0px;background:#4cc3cf"></div>
<div class="b" style="left:357.5px;top:424.2px;width:2.0px;height:10.300000000000011px;background:#4cc3cf"></div>
<div class="b" style="left:549.4px;top:432.5px;width:9.600000000000023px;height:2.0px;background:#4cc3cf"></div>
<div class="b" style="left:557px;top:424.2px;width:2px;height:10.300000000000011px;background:#4cc3cf"></div>
<div class="b" style="left:442.4px;top:222.2px;width:32.5px;height:2.0px;background:#4cc3cf"></div>
<div class="b" style="left:442.4px;top:432.5px;width:32.5px;height:2.0px;background:#4cc3cf"></div>
<div class="b" style="left:357.5px;top:312.8px;width:2.0px;height:32.30000000000001px;background:#4cc3cf"></div>
<div class="b" style="left:556.8px;top:312.8px;width:2.1000000000000227px;height:32.30000000000001px;background:#4cc3cf"></div>
<div class="b" style="left:448.6px;top:224px;width:19.599999999999966px;height:12.300000000000011px;background:#4cc3cf;border-radius:4px"></div>
<div class="b" style="left:452.3px;top:227.2px;width:12.199999999999989px;height:1.3000000000000114px;background:#e6f6f8"></div>
<div class="b" style="left:452.3px;top:231.1px;width:12.199999999999989px;height:1.3000000000000114px;background:#e6f6f8"></div>
<div class="b" style="left:442.7px;top:240.7px;width:14.600000000000023px;height:14.600000000000023px;border:1px solid #a9b0b4;border-radius:50%;box-sizing:border-box"></div>
<svg class="s" style="left:445.5px;top:243.5px" width="9" height="9" viewBox="0 0 9 9"><path d="M4.5 0.4L2.7 2.9H6.3Z M4.5 8.6L2.7 6.1H6.3Z" fill="#505050"/><path d="M1 4.5H8" stroke="#505050" stroke-width="0.9"/></svg>
<div class="b" style="left:459.5px;top:240.7px;width:14.600000000000023px;height:14.600000000000023px;border:1px solid #a9b0b4;border-radius:50%;box-sizing:border-box"></div>
<svg class="s" style="left:462.8px;top:244px" width="8" height="8" viewBox="0 0 8 8"><path d="M0.5 2.6V0.5H2.6M5.4 0.5H7.5V2.6M7.5 5.4V7.5H5.4M2.6 7.5H0.5V5.4" stroke="#555" stroke-width="0.9" fill="none"/></svg>
<svg class="s" style="left:488.3px;top:237.3px" width="9.5" height="9" viewBox="0 0 9.5 9"><circle cx="3.7" cy="3.7" r="2.95" stroke="#4d4d4d" stroke-width="1" fill="none"/><path d="M5.8 5.8L8.8 8.6" stroke="#4d4d4d" stroke-width="1.2"/></svg>
<svg class="s" style="left:504.2px;top:237.0px" width="10.5" height="9.5" viewBox="0 0 10.5 9.5"><path d="M0.5 1.5L5.8 0.5V9L0.5 8Z" stroke="#4d4d4d" stroke-width="0.9" fill="none"/><path d="M5.8 1.2H9.8V8.3H5.8" stroke="#4d4d4d" stroke-width="0.9" fill="none"/><path d="M2 3.3L4.3 6.3M4.3 3.3L2 6.3" stroke="#4d4d4d" stroke-width="0.8"/><path d="M7.2 2.2V7.3M8.5 2.2V7.3" stroke="#999" stroke-width="0.7"/></svg>
<svg class="s" style="left:520.8px;top:237.10000000000002px" width="9.5" height="9.5" viewBox="0 0 9.5 9.5"><rect x="0.5" y="0.5" width="8.5" height="8.5" stroke="#4d4d4d" stroke-width="0.9" fill="none"/><path d="M0.5 2.9H9M0.5 5.3H9M0.5 7.3H9M3.3 2.9V9M6.2 2.9V9" stroke="#4d4d4d" stroke-width="0.75"/></svg>
<svg class="s" style="left:537.1px;top:237.0px" width="9.5" height="9.5" viewBox="0 0 9.5 9.5"><path d="M1.8 7.7L7.7 1.8" stroke="#4d4d4d" stroke-width="0.9"/><path d="M9.2 0.3L5.6 1.2L8.3 3.9Z M0.3 9.2L1.2 5.6L3.9 8.3Z" fill="#4d4d4d"/></svg>
<div class="b" style="left:367.8px;top:258.3px;width:181.59999999999997px;height:165.89999999999998px;background:#d3414a"></div>
<div class="b" style="left:372.6px;top:262.8px;width:71.29999999999995px;height:65.5px;background:#a51c22;box-shadow:inset 0 0 0 0.6px rgba(110,20,20,0.35);overflow:hidden"></div>
<div class="b" style="left:443.9px;top:262.8px;width:51.10000000000002px;height:60.39999999999998px;background:#a81e25;box-shadow:inset 0 0 0 0.6px rgba(110,20,20,0.35);overflow:hidden"></div>
<div class="b" style="left:495px;top:262.8px;width:50.60000000000002px;height:60.39999999999998px;background:#a81e25;box-shadow:inset 0 0 0 0.6px rgba(110,20,20,0.35);overflow:hidden"></div>
<div class="b" style="left:372.6px;top:328.3px;width:71.29999999999995px;height:48.5px;background:#cd2f37;box-shadow:inset 0 0 0 0.6px rgba(110,20,20,0.35);overflow:hidden"></div>
<div class="b" style="left:443.9px;top:323.2px;width:54.10000000000002px;height:49.60000000000002px;background:#e1a19c;box-shadow:inset 0 0 0 0.6px rgba(110,20,20,0.35);overflow:hidden"></div>
<div class="b" style="left:498px;top:323.2px;width:47.60000000000002px;height:34.19999999999999px;background:#a81e25;box-shadow:inset 0 0 0 0.6px rgba(110,20,20,0.35);overflow:hidden"></div>
<div class="b" style="left:372.6px;top:376.8px;width:71.29999999999995px;height:43.599999999999966px;background:#b7d0da;box-shadow:inset 0 0 0 0.6px rgba(110,20,20,0.35);overflow:hidden"></div>
<div class="b" style="left:443.9px;top:372.8px;width:54.10000000000002px;height:47.599999999999966px;background:#e0a19c;box-shadow:inset 0 0 0 0.6px rgba(110,20,20,0.35);overflow:hidden"></div>
<div class="b" style="left:498px;top:357.4px;width:47.60000000000002px;height:31.30000000000001px;background:#dfa29d;box-shadow:inset 0 0 0 0.6px rgba(110,20,20,0.35);overflow:hidden"></div>
<div class="b" style="left:498px;top:388.7px;width:47.60000000000002px;height:31.69999999999999px;background:#e1b4b1;box-shadow:inset 0 0 0 0.6px rgba(110,20,20,0.35);overflow:hidden"></div>
<div class="t" style="left:373.8px;top:263.0px;width:69.79999999999995px;overflow:hidden;font-size:8.8px;line-height:10px;color:#4a0f10">Financials</div>
<div class="t" style="left:445.09999999999997px;top:263.0px;width:49.60000000000002px;overflow:hidden;font-size:8.8px;line-height:10px;color:#4a0f10">Industrials</div>
<div class="t" style="left:496.2px;top:263.0px;width:49.10000000000002px;overflow:hidden;font-size:8.8px;line-height:10px;color:#4a0f10">Oil &amp; Gas</div>
<div class="t" style="left:373.8px;top:328.5px;width:69.79999999999995px;overflow:hidden;font-size:8.8px;line-height:10px;color:#5a1214">Consumer Goods</div>
<div class="t" style="left:445.09999999999997px;top:323.4px;width:52.60000000000002px;overflow:hidden;font-size:8.8px;line-height:10px;color:#9a625e">Technology</div>
<div class="t" style="left:499.2px;top:323.4px;width:46.10000000000002px;overflow:hidden;font-size:8.8px;line-height:10px;color:#3a0a0a">Basic Mate</div>
<div class="t" style="left:373.8px;top:377.0px;width:69.79999999999995px;overflow:hidden;font-size:8.8px;line-height:10px;color:#6f8a96">Health Care</div>
<div class="t" style="left:445.09999999999997px;top:373.0px;width:52.60000000000002px;overflow:hidden;font-size:8.8px;line-height:10px;color:#9a5a56">Consumer Se</div>
<div class="t" style="left:499.2px;top:357.59999999999997px;width:46.10000000000002px;overflow:hidden;font-size:8.8px;line-height:10px;color:#9a6a66">Utilities</div>
<div class="t" style="left:499.2px;top:388.9px;width:46.10000000000002px;overflow:hidden;font-size:8.8px;line-height:10px;color:#9a7470">Telecommu</div>
<div class="b" style="left:361.0px;top:321.9px;width:14.600000000000023px;height:14.600000000000023px;background:#f3f5f6;border:1px solid #b9c1c5;border-radius:50%;box-sizing:border-box"></div>
<svg class="s" style="left:363.8px;top:324.7px" width="9" height="9" viewBox="0 0 9 9"><path d="M0.2 4.5L2.9 2.6V6.4Z M8.8 4.5L6.1 2.6V6.4Z" fill="#505050"/><path d="M4.5 0.6V8.4" stroke="#505050" stroke-width="0.9"/></svg>
<div class="b" style="left:540.8000000000001px;top:322.09999999999997px;width:14.599999999999909px;height:14.600000000000023px;background:#f3f5f6;border:1px solid #b9c1c5;border-radius:50%;box-sizing:border-box"></div>
<svg class="s" style="left:543.6px;top:324.9px" width="9" height="9" viewBox="0 0 9 9"><path d="M0.2 4.5L2.9 2.6V6.4Z M8.8 4.5L6.1 2.6V6.4Z" fill="#505050"/><path d="M4.5 0.6V8.4" stroke="#505050" stroke-width="0.9"/></svg>
<div class="b" style="left:451.2px;top:416.5px;width:14.600000000000023px;height:14.600000000000023px;background:#f3f5f6;border:1px solid #b9c1c5;border-radius:50%;box-sizing:border-box"></div>
<svg class="s" style="left:454.0px;top:419.3px" width="9" height="9" viewBox="0 0 9 9"><path d="M4.5 0.4L2.7 2.9H6.3Z M4.5 8.6L2.7 6.1H6.3Z" fill="#505050"/><path d="M1 4.5H8" stroke="#505050" stroke-width="0.9"/></svg>
<div class="b" style="left:346px;top:435.6px;width:412.70000000000005px;height:5.599999999999966px;background:#ececec"></div>
<div class="b" style="left:346.2px;top:435.6px;width:317.09999999999997px;height:5.599999999999966px;background:#c3c3c3;border-radius:3px"></div>
<div class="b" style="left:758px;top:29.2px;width:5.7000000000000455px;height:410.5px;background:#c3c3c3;border-radius:3px"></div>
<div class="b" style="left:345.4px;top:29.5px;width:1.3999999999999773px;height:232.5px;background-image:linear-gradient(to bottom,#8c8c8c 1.5px,transparent 1.5px);background-size:1.4px 2.7px"></div>
<div class="b" style="left:356.4px;top:178px;width:1.5px;height:258px;background-image:linear-gradient(to bottom,#999 1.4px,transparent 1.4px);background-size:1.5px 2.8px"></div>
<div class="b" style="left:552.2px;top:29.5px;width:1.3999999999999773px;height:231.5px;background-image:linear-gradient(to bottom,#8c8c8c 1.5px,transparent 1.5px);background-size:1.4px 2.7px"></div>
<div class="b" style="left:562.8px;top:178px;width:1.5px;height:258px;background-image:linear-gradient(to bottom,#999 1.4px,transparent 1.4px);background-size:1.5px 2.8px"></div>
<svg class="s" style="left:0px;top:0px" width="768" height="446" viewBox="0 0 768 446"><rect x="342" y="25.1" width="7" height="237.5" rx="1" stroke="#f15a29" stroke-width="1.9" fill="none"/><rect x="353.5" y="174.4" width="6.5" height="262.3" rx="1" stroke="#f15a29" stroke-width="1.9" fill="none"/><rect x="549" y="25.1" width="7.6" height="236.5" rx="1" stroke="#f15a29" stroke-width="1.9" fill="none"/><rect x="560" y="174.4" width="7.25" height="262.3" rx="1" stroke="#f15a29" stroke-width="1.9" fill="none"/></svg>
</body></html>
